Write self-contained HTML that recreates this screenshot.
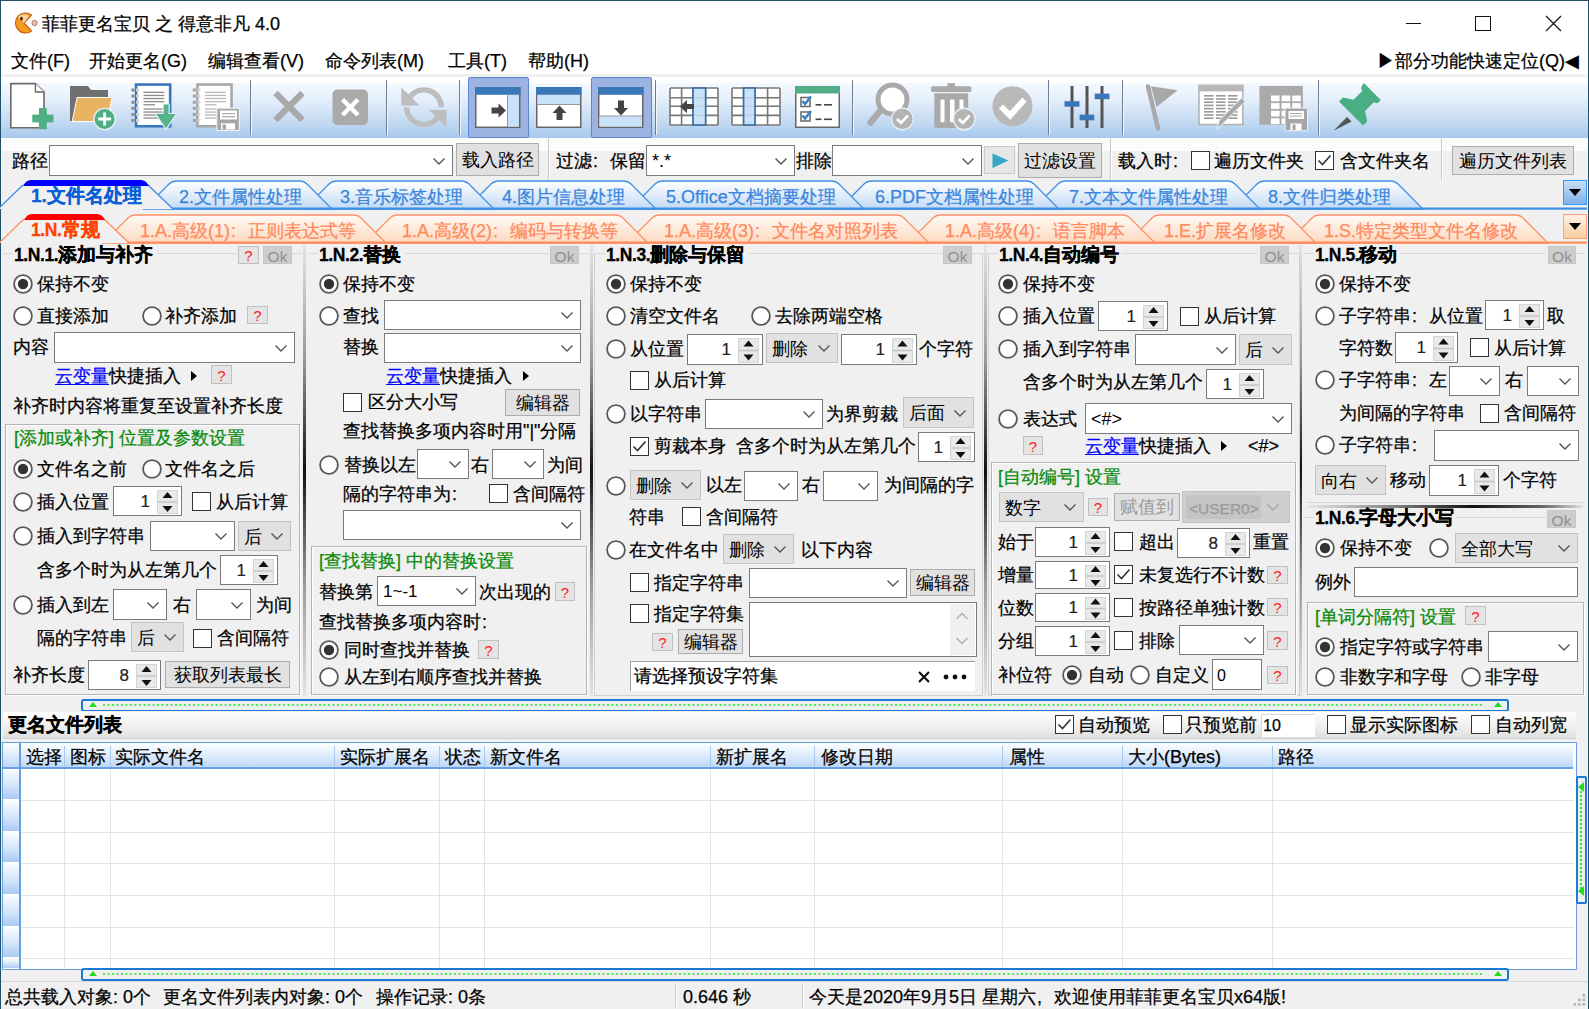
<!DOCTYPE html><html><head><meta charset="utf-8"><style>html,body{margin:0;padding:0;}
body{width:1589px;height:1009px;overflow:hidden;background:#f0f0f0;font-family:"Liberation Sans",sans-serif;}
#root{position:relative;width:1589px;height:1009px;overflow:hidden;background:#f0f0f0;}
.t{position:absolute;white-space:nowrap;line-height:26px;font-size:18px;-webkit-text-stroke:0.25px currentColor;}
.rd{position:absolute;}
.ck{position:absolute;width:19px;height:19px;box-sizing:border-box;border:1.5px solid #333;background:#fff;}
.ck svg{position:absolute;left:-1.5px;top:-1.5px;}
.cb{position:absolute;box-sizing:border-box;border:1px solid #7a7a7a;background:#fff;}
.cb.gray{background:#e1e1e1;border-color:#c4c4c4;}
.spn{position:absolute;box-sizing:border-box;border:1px solid #7a7a7a;background:#fff;}
.spn .num{position:absolute;line-height:26px;font-size:17px;color:#222;-webkit-text-stroke:0.2px #222;}
.sp{position:absolute;}
.sp svg{display:block}
.bt{position:absolute;box-sizing:border-box;border:1px solid #adadad;background:#e1e1e1;text-align:center;font-size:18px;white-space:nowrap;}
.q{position:absolute;box-sizing:border-box;border:1.5px solid #c0c0c0;background:#e4e4e4;text-align:center;font-size:15px;color:#ff2020;}
.ok{position:absolute;box-sizing:border-box;background:#cdcdcd;border:1px solid #c6c6c6;text-align:center;font-size:15.5px;color:#8f8f8f;}
.fc{display:inline-block;width:1em;text-align:left;padding-left:1px;box-sizing:border-box;}
.ed{position:absolute;box-sizing:border-box;border:1px solid #7a7a7a;background:#fff;font-size:18px;line-height:26px;}
</style></head><body><div id="root"><div style="position:absolute;left:0px;top:0px;width:1589px;height:40px;box-sizing:border-box;background:#fff;"></div>
<div style="position:absolute;left:0px;top:40px;width:1589px;height:35px;box-sizing:border-box;background:#fff;"></div>
<div style="position:absolute;left:0px;top:0px;width:1589px;height:1px;box-sizing:border-box;background:#1e4f6b;"></div>
<div style="position:absolute;left:0px;top:0px;width:1px;height:1009px;box-sizing:border-box;background:#1e4f6b;"></div>
<div style="position:absolute;left:1588px;top:0px;width:1px;height:1009px;box-sizing:border-box;background:#1e4f6b;"></div>
<svg style="position:absolute;left:12px;top:11px" width="26" height="24" viewBox="0 0 26 24"><path d="M19.5 4 A10 10 0 1 0 19.5 20 L12 12 Z" fill="#f59a23" stroke="#c8620a" stroke-width="1.2"/><path d="M6 6 A8 8 0 0 1 17 5 L12 12 Z" fill="#fbd29a"/><ellipse cx="9.5" cy="7.8" rx="1.3" ry="2" fill="#222"/><circle cx="22.5" cy="12" r="2.6" fill="#f3c0b0" stroke="#8a5a4a" stroke-width="0.8"/></svg>
<div class="t" style="left:42px;top:11px;font-size:18px;color:#000;">菲菲更名宝贝 之 得意非凡 4.0</div>
<div style="position:absolute;left:1406px;top:23px;width:15px;height:1px;box-sizing:border-box;background:#111;"></div>
<div style="position:absolute;left:1475px;top:16px;width:16px;height:15px;box-sizing:border-box;border:1.2px solid #111;"></div>
<svg style="position:absolute;left:1545px;top:15px" width="17" height="17" viewBox="0 0 17 17"><path d="M1 1 L16 16 M16 1 L1 16" stroke="#111" stroke-width="1.2"/></svg>
<div class="t" style="left:11px;top:48px;font-size:18px;color:#000;">文件(F)</div>
<div class="t" style="left:89px;top:48px;font-size:18px;color:#000;">开始更名(G)</div>
<div class="t" style="left:208px;top:48px;font-size:18px;color:#000;">编辑查看(V)</div>
<div class="t" style="left:325px;top:48px;font-size:18px;color:#000;">命令列表(M)</div>
<div class="t" style="left:448px;top:48px;font-size:18px;color:#000;">工具(T)</div>
<div class="t" style="left:528px;top:48px;font-size:18px;color:#000;">帮助(H)</div>
<div class="t" style="left:1377px;top:48px;font-size:18px;color:#000;">▶部分功能快速定位(Q)◀</div>
<div style="position:absolute;left:2px;top:74px;width:1585px;height:3px;box-sizing:border-box;background:#f0f0f0;"></div>
<div style="position:absolute;left:1px;top:77px;width:1587px;height:6px;box-sizing:border-box;background:#fff;"></div>
<div style="position:absolute;left:1px;top:83px;width:1587px;height:55px;box-sizing:border-box;background:linear-gradient(to bottom,#f4f9fe 0%,#e6f0fb 28%,#d8e7f9 45%,#c8ddf2 65%,#b3d0ef 88%,#a9c8ee 100%);"></div>
<div style="position:absolute;left:250px;top:80px;width:2px;height:55px;box-sizing:border-box;background:linear-gradient(to right,#6e7f95 0 1px,#f4f8fd 1px 2px);"></div>
<div style="position:absolute;left:386px;top:80px;width:2px;height:55px;box-sizing:border-box;background:linear-gradient(to right,#6e7f95 0 1px,#f4f8fd 1px 2px);"></div>
<div style="position:absolute;left:459px;top:80px;width:2px;height:55px;box-sizing:border-box;background:linear-gradient(to right,#6e7f95 0 1px,#f4f8fd 1px 2px);"></div>
<div style="position:absolute;left:655px;top:80px;width:2px;height:55px;box-sizing:border-box;background:linear-gradient(to right,#6e7f95 0 1px,#f4f8fd 1px 2px);"></div>
<div style="position:absolute;left:852px;top:80px;width:2px;height:55px;box-sizing:border-box;background:linear-gradient(to right,#6e7f95 0 1px,#f4f8fd 1px 2px);"></div>
<div style="position:absolute;left:1048px;top:80px;width:2px;height:55px;box-sizing:border-box;background:linear-gradient(to right,#6e7f95 0 1px,#f4f8fd 1px 2px);"></div>
<div style="position:absolute;left:1122px;top:80px;width:2px;height:55px;box-sizing:border-box;background:linear-gradient(to right,#6e7f95 0 1px,#f4f8fd 1px 2px);"></div>
<div style="position:absolute;left:1318px;top:80px;width:2px;height:55px;box-sizing:border-box;background:linear-gradient(to right,#6e7f95 0 1px,#f4f8fd 1px 2px);"></div>
<svg style="position:absolute;left:0px;top:75px;overflow:visible" width="60" height="60" viewBox="0 0 60 60"><path d="M10.8 8.6 H35.4 L44 17 V52.7 H10.8 Z" fill="#fff" stroke="#6a6a6a" stroke-width="1.6"/><path d="M35.4 8.6 V17 H44" fill="#fff" stroke="#6a6a6a" stroke-width="1.4"/><rect x="32.3" y="39.6" width="21.2" height="7.8" fill="#4fae84"/><rect x="39" y="33" width="7.8" height="21.2" fill="#4fae84"/></svg>
<svg style="position:absolute;left:60px;top:75px;overflow:visible" width="60" height="60" viewBox="0 0 60 60"><path d="M10 11 H28 L31 15 H48 V46 H10 Z" fill="#707070"/><path d="M17 22.5 H52 L47.5 46.5 H12.2 Z" fill="#e9b462" stroke="#fff" stroke-width="1"/><circle cx="44.6" cy="44" r="10.6" fill="#4fae84" stroke="#eaf2fa" stroke-width="1.2"/><path d="M44.6 37.5 V50.5 M38.1 44 H51.1" stroke="#fff" stroke-width="2.8"/></svg>
<svg style="position:absolute;left:125px;top:75px;overflow:visible" width="60" height="60" viewBox="0 0 60 60"><rect x="11.050000000000011" y="9.549999999999997" width="34.099999999999994" height="41.7" fill="#fff" stroke="#3a75c0" stroke-width="2.6"/><rect x="6.400000000000006" y="13.5" width="3" height="3" fill="#8a8a8a"/><rect x="11" y="13.5" width="3" height="3" fill="#cfcfcf"/><rect x="6.400000000000006" y="19.6" width="3" height="3" fill="#8a8a8a"/><rect x="11" y="19.6" width="3" height="3" fill="#cfcfcf"/><rect x="6.400000000000006" y="25.7" width="3" height="3" fill="#8a8a8a"/><rect x="11" y="25.7" width="3" height="3" fill="#cfcfcf"/><rect x="6.400000000000006" y="31.799999999999997" width="3" height="3" fill="#8a8a8a"/><rect x="11" y="31.799999999999997" width="3" height="3" fill="#cfcfcf"/><rect x="6.400000000000006" y="37.9" width="3" height="3" fill="#8a8a8a"/><rect x="11" y="37.9" width="3" height="3" fill="#cfcfcf"/><rect x="6.400000000000006" y="44.0" width="3" height="3" fill="#8a8a8a"/><rect x="11" y="44.0" width="3" height="3" fill="#cfcfcf"/><rect x="18.5" y="16.699999999999996" width="20.8" height="1.3" fill="#8c8c8c"/><rect x="18.5" y="19.800000000000004" width="20.8" height="1.3" fill="#8c8c8c"/><rect x="18.5" y="22.9" width="20.8" height="1.3" fill="#8c8c8c"/><rect x="18.5" y="25.999999999999993" width="20.8" height="1.3" fill="#8c8c8c"/><rect x="18.5" y="29.1" width="11.5" height="1.3" fill="#8c8c8c"/><rect x="18.5" y="33.4" width="20.8" height="1.3" fill="#8c8c8c"/><rect x="18.5" y="36.4" width="20.8" height="1.3" fill="#8c8c8c"/><rect x="18.5" y="39.4" width="20.8" height="1.3" fill="#8c8c8c"/><rect x="18.5" y="42.4" width="20.8" height="1.3" fill="#8c8c8c"/><path d="M38.1 29 H44.2 V38.5 H51.7 L41 54.4 L30.2 38.5 H38.1 Z" fill="#55b48a" stroke="#e6f0fb" stroke-width="1.2"/></svg>
<svg style="position:absolute;left:187px;top:75px;overflow:visible" width="60" height="60" viewBox="0 0 60 60"><rect x="10.450000000000017" y="9.549999999999997" width="34.099999999999994" height="41.7" fill="#fff" stroke="#a8a8a8" stroke-width="2.6"/><rect x="5.800000000000011" y="13.5" width="3" height="3" fill="#a0a0a0"/><rect x="10.400000000000006" y="13.5" width="3" height="3" fill="#d6d6d6"/><rect x="5.800000000000011" y="19.6" width="3" height="3" fill="#a0a0a0"/><rect x="10.400000000000006" y="19.6" width="3" height="3" fill="#d6d6d6"/><rect x="5.800000000000011" y="25.7" width="3" height="3" fill="#a0a0a0"/><rect x="10.400000000000006" y="25.7" width="3" height="3" fill="#d6d6d6"/><rect x="5.800000000000011" y="31.799999999999997" width="3" height="3" fill="#a0a0a0"/><rect x="10.400000000000006" y="31.799999999999997" width="3" height="3" fill="#d6d6d6"/><rect x="5.800000000000011" y="37.9" width="3" height="3" fill="#a0a0a0"/><rect x="10.400000000000006" y="37.9" width="3" height="3" fill="#d6d6d6"/><rect x="5.800000000000011" y="44.0" width="3" height="3" fill="#a0a0a0"/><rect x="10.400000000000006" y="44.0" width="3" height="3" fill="#d6d6d6"/><rect x="17.900000000000006" y="16.699999999999996" width="20.8" height="1.3" fill="#b8b8b8"/><rect x="17.900000000000006" y="19.800000000000004" width="20.8" height="1.3" fill="#b8b8b8"/><rect x="17.900000000000006" y="22.9" width="20.8" height="1.3" fill="#b8b8b8"/><rect x="17.900000000000006" y="25.999999999999993" width="20.8" height="1.3" fill="#b8b8b8"/><rect x="17.900000000000006" y="29.1" width="11.5" height="1.3" fill="#b8b8b8"/><rect x="17.900000000000006" y="33.4" width="20.8" height="1.3" fill="#b8b8b8"/><rect x="17.900000000000006" y="36.4" width="20.8" height="1.3" fill="#b8b8b8"/><rect x="17.900000000000006" y="39.4" width="20.8" height="1.3" fill="#b8b8b8"/><rect x="17.900000000000006" y="42.4" width="20.8" height="1.3" fill="#b8b8b8"/><rect x="29.8" y="33.2" width="22.6" height="22.3" rx="1.5" fill="#a6a6a6" stroke="#e9f1fa" stroke-width="1.2"/><rect x="33" y="35.5" width="17" height="9" fill="#fff"/><rect x="35" y="38" width="13" height="1.2" fill="#aaa"/><rect x="35" y="41" width="13" height="1.2" fill="#aaa"/><rect x="34" y="48.3" width="14" height="6.2" fill="#fff"/><rect x="35.5" y="49.5" width="3.5" height="5" fill="#a6a6a6"/></svg>
<svg style="position:absolute;left:265px;top:75px;overflow:visible" width="50" height="60" viewBox="0 0 50 60"><path d="M10.5 18 L37.5 45 M37.5 18 L10.5 45" stroke="#a9a9a9" stroke-width="6.2"/></svg>
<svg style="position:absolute;left:325px;top:75px;overflow:visible" width="50" height="60" viewBox="0 0 50 60"><rect x="7.5" y="14.5" width="35.5" height="35.5" rx="5" fill="#aaaaaa"/><path d="M17.5 24.5 L33 40 M33 24.5 L17.5 40" stroke="#fff" stroke-width="4.4"/></svg>
<svg style="position:absolute;left:395px;top:75px;overflow:visible" width="60" height="60" viewBox="0 0 60 60"><path d="M14.7 22.2 A17.35 17.35 0 0 1 46.25 32.2" fill="none" stroke="#bdbdbd" stroke-width="5.3"/><path d="M43.1 42.15 A17.35 17.35 0 0 1 11.55 32.2" fill="none" stroke="#bdbdbd" stroke-width="5.3"/><path d="M6.3 12.5 L6.3 30.5 L24.5 30.5 Z" fill="#bdbdbd"/><path d="M51.5 52 L51.5 35 L34 35 Z" fill="#bdbdbd"/></svg>
<div style="position:absolute;left:468px;top:77px;width:61px;height:61px;box-sizing:border-box;background:#9db4e3;border:1px solid #5b86d0;border-radius:2px;"></div>
<div style="position:absolute;left:591px;top:77px;width:61px;height:61px;box-sizing:border-box;background:#9db4e3;border:1px solid #5b86d0;border-radius:2px;"></div>
<svg style="position:absolute;left:475px;top:87px;overflow:visible" width="46" height="41" viewBox="0 0 46 41"><rect x="0.75" y="0.75" width="44" height="39.5" fill="#fff" stroke="#666" stroke-width="1.5"/><rect x="32.5" y="8" width="11.5" height="31.5" fill="#c8e2fa"/><line x1="32.5" y1="8" x2="32.5" y2="40" stroke="#999" stroke-width="1"/><path d="M16.5 20.5 H23.5 V16.5 L31 23.5 L23.5 30.5 V26.5 H16.5 Z" fill="#444"/><rect x="0" y="0" width="45.5" height="7.8" fill="#3a78b8"/></svg>
<svg style="position:absolute;left:536px;top:87px;overflow:visible" width="46" height="41" viewBox="0 0 46 41"><rect x="0.75" y="0.75" width="44" height="39.5" fill="#fff" stroke="#666" stroke-width="1.5"/><rect x="1.5" y="8" width="42.5" height="9.5" fill="#c8e2fa"/><line x1="1" y1="17.5" x2="44" y2="17.5" stroke="#999" stroke-width="1"/><path d="M23.5 18.5 L30.5 26 H26.5 V33 H20.5 V26 H16.5 Z" fill="#444"/><rect x="0" y="0" width="45.5" height="7.8" fill="#3a78b8"/></svg>
<svg style="position:absolute;left:598px;top:87px;overflow:visible" width="46" height="41" viewBox="0 0 46 41"><rect x="0.75" y="0.75" width="44" height="39.5" fill="#fff" stroke="#666" stroke-width="1.5"/><rect x="1.5" y="29" width="42.5" height="10.5" fill="#c8e2fa"/><line x1="1" y1="29" x2="44" y2="29" stroke="#999" stroke-width="1"/><path d="M20 13.5 H26 V21 H30 L23 28.5 L16 21 H20 Z" fill="#444"/><rect x="0" y="0" width="45.5" height="7.8" fill="#3a78b8"/></svg>
<svg style="position:absolute;left:670px;top:87.6px;overflow:visible" width="48" height="37" viewBox="0 0 48 37"><rect x="0" y="0" width="48" height="37" fill="#fff"/><rect x="23" y="0" width="12.600000000000001" height="37" fill="#c8e2fa"/><line x1="0" y1="0" x2="0" y2="37" stroke="#777" stroke-width="1.6"/><line x1="11.6" y1="0" x2="11.6" y2="37" stroke="#777" stroke-width="1.6"/><line x1="23" y1="0" x2="23" y2="37" stroke="#777" stroke-width="1.6"/><line x1="35.6" y1="0" x2="35.6" y2="37" stroke="#777" stroke-width="1.6"/><line x1="48" y1="0" x2="48" y2="37" stroke="#777" stroke-width="1.6"/><line x1="0" y1="0" x2="48" y2="0" stroke="#777" stroke-width="1.6"/><line x1="0" y1="9.8" x2="48" y2="9.8" stroke="#777" stroke-width="1.6"/><line x1="0" y1="18.2" x2="48" y2="18.2" stroke="#777" stroke-width="1.6"/><line x1="0" y1="27.4" x2="48" y2="27.4" stroke="#777" stroke-width="1.6"/><line x1="0" y1="37" x2="48" y2="37" stroke="#777" stroke-width="1.6"/><rect x="23" y="0" width="12.600000000000001" height="37" fill="#c8e2fa" fill-opacity="0.85" stroke="#3a6ea8" stroke-width="1.6"/><path d="M10 18.5 L17 11.9 V16 H24 V21 H17 V25.2 Z" fill="#444"/></svg>
<svg style="position:absolute;left:731.7px;top:87.6px;overflow:visible" width="48" height="37" viewBox="0 0 48 37"><rect x="0" y="0" width="48" height="37" fill="#fff"/><rect x="11.6" y="0" width="11.4" height="37" fill="#c8e2fa"/><line x1="0" y1="0" x2="0" y2="37" stroke="#777" stroke-width="1.6"/><line x1="11.6" y1="0" x2="11.6" y2="37" stroke="#777" stroke-width="1.6"/><line x1="23" y1="0" x2="23" y2="37" stroke="#777" stroke-width="1.6"/><line x1="35.6" y1="0" x2="35.6" y2="37" stroke="#777" stroke-width="1.6"/><line x1="48" y1="0" x2="48" y2="37" stroke="#777" stroke-width="1.6"/><line x1="0" y1="0" x2="48" y2="0" stroke="#777" stroke-width="1.6"/><line x1="0" y1="9.8" x2="48" y2="9.8" stroke="#777" stroke-width="1.6"/><line x1="0" y1="18.2" x2="48" y2="18.2" stroke="#777" stroke-width="1.6"/><line x1="0" y1="27.4" x2="48" y2="27.4" stroke="#777" stroke-width="1.6"/><line x1="0" y1="37" x2="48" y2="37" stroke="#777" stroke-width="1.6"/><rect x="11.6" y="0" width="11.4" height="37" fill="#c8e2fa" fill-opacity="0.85" stroke="#3a6ea8" stroke-width="1.6"/></svg>
<svg style="position:absolute;left:795px;top:86px;overflow:visible" width="45" height="42" viewBox="0 0 45 42"><rect x="0.75" y="0.75" width="43.5" height="40.5" fill="#fff" stroke="#666" stroke-width="1.5"/><rect x="0" y="0" width="45" height="7.5" fill="#52ad86"/><rect x="6" y="11.5" width="9" height="9" fill="none" stroke="#666" stroke-width="1.5"/><path d="M7.5 15 L10 18 L16 10.5" stroke="#3d7ec8" stroke-width="2.6" fill="none"/><rect x="6" y="26" width="9" height="9" fill="none" stroke="#666" stroke-width="1.5"/><path d="M7.5 29.5 L10 32.5 L16 25" stroke="#3d7ec8" stroke-width="2.6" fill="none"/><rect x="20.5" y="18" width="6" height="1.6" fill="#444"/><rect x="29" y="18" width="8" height="1.6" fill="#444"/><rect x="20.5" y="32.5" width="6" height="1.6" fill="#444"/><rect x="29" y="32.5" width="8" height="1.6" fill="#444"/></svg>
<svg style="position:absolute;left:860px;top:75px;overflow:visible" width="60" height="60" viewBox="0 0 60 60"><circle cx="32.5" cy="24.5" r="14.5" fill="#fff" stroke="#aaaaaa" stroke-width="5"/><path d="M20 36 L10.5 47.5" stroke="#aaaaaa" stroke-width="6.5" stroke-linecap="round"/><circle cx="42.5" cy="44" r="10.8" fill="#b4b4b4" stroke="#e9f1fa" stroke-width="1.2"/><path d="M37 44 L41 48 L48 40.5" stroke="#fff" stroke-width="2.6" fill="none"/></svg>
<svg style="position:absolute;left:925px;top:75px;overflow:visible" width="60" height="60" viewBox="0 0 60 60"><rect x="6" y="11.3" width="40.4" height="5.7" rx="1.5" fill="#aaaaaa"/><rect x="22.5" y="8.2" width="7.5" height="4" fill="#aaaaaa"/><path d="M9.3 18.3 H43.2 V51 Q43.2 52.9 41.3 52.9 H11.2 Q9.3 52.9 9.3 51 Z" fill="#aaaaaa"/><rect x="15.5" y="24.5" width="4" height="22.7" rx="1" fill="#fff"/><rect x="25" y="24.5" width="4.5" height="22.7" rx="1" fill="#fff"/><rect x="34.5" y="24.5" width="4" height="22.7" rx="1" fill="#fff"/><circle cx="39.2" cy="44" r="10.8" fill="#b4b4b4" stroke="#e9f1fa" stroke-width="1.4"/><path d="M33.7 44 L37.7 48 L44.7 40.5" stroke="#fff" stroke-width="2.6" fill="none"/></svg>
<svg style="position:absolute;left:985px;top:75px;overflow:visible" width="60" height="60" viewBox="0 0 60 60"><circle cx="27.5" cy="31.2" r="20" fill="#b9b9b9"/><path d="M16 31.5 L25 40.5 L39.5 24.5" stroke="#fff" stroke-width="6" fill="none"/></svg>
<svg style="position:absolute;left:1060px;top:75px;overflow:visible" width="60" height="60" viewBox="0 0 60 60"><rect x="10.5" y="11" width="3" height="42" fill="#555"/><rect x="25.5" y="11" width="3" height="42" fill="#555"/><rect x="40.5" y="11" width="3" height="42" fill="#555"/><rect x="4.5" y="26.2" width="15" height="5.5" fill="#3a76b8"/><rect x="19.6" y="39.6" width="14.7" height="5.7" fill="#3a76b8"/><rect x="34.7" y="18.6" width="14.8" height="5.6" fill="#3a76b8"/></svg>
<svg style="position:absolute;left:1135px;top:75px;overflow:visible" width="60" height="60" viewBox="0 0 60 60"><path d="M13 11.5 L23 53.5" stroke="#a9a9a9" stroke-width="4.5" stroke-linecap="round"/><path d="M16 11.3 L42.8 15.2 L21.5 32 Z" fill="#a9a9a9"/></svg>
<svg style="position:absolute;left:1195px;top:75px;overflow:visible" width="60" height="60" viewBox="0 0 60 60"><rect x="4" y="10.5" width="43.8" height="39" fill="#fff" stroke="#b0b0b0" stroke-width="1.5"/><rect x="3.3" y="9.8" width="45.2" height="6.6" fill="#b8b8b8"/><rect x="9" y="20.0" width="9.5" height="1.6" fill="#999"/><rect x="9" y="23.2" width="9.5" height="1.6" fill="#999"/><rect x="9" y="26.4" width="9.5" height="1.6" fill="#999"/><rect x="9" y="29.6" width="9.5" height="1.6" fill="#999"/><rect x="9" y="32.8" width="9.5" height="1.6" fill="#999"/><rect x="9" y="36.0" width="9.5" height="1.6" fill="#999"/><rect x="9" y="39.2" width="9.5" height="1.6" fill="#999"/><rect x="9" y="42.400000000000006" width="9.5" height="1.6" fill="#999"/><rect x="21" y="20.0" width="9.5" height="1.6" fill="#999"/><rect x="21" y="23.2" width="9.5" height="1.6" fill="#999"/><rect x="21" y="26.4" width="9.5" height="1.6" fill="#999"/><rect x="21" y="29.6" width="9.5" height="1.6" fill="#999"/><rect x="21" y="32.8" width="9.5" height="1.6" fill="#999"/><rect x="21" y="36.0" width="9.5" height="1.6" fill="#999"/><rect x="21" y="39.2" width="9.5" height="1.6" fill="#999"/><rect x="21" y="42.400000000000006" width="9.5" height="1.6" fill="#999"/><rect x="33" y="20.0" width="9.5" height="1.6" fill="#999"/><rect x="33" y="23.2" width="9.5" height="1.6" fill="#999"/><rect x="33" y="26.4" width="9.5" height="1.6" fill="#999"/><rect x="33" y="29.6" width="9.5" height="1.6" fill="#999"/><rect x="33" y="32.8" width="9.5" height="1.6" fill="#999"/><rect x="33" y="36.0" width="9.5" height="1.6" fill="#999"/><rect x="33" y="39.2" width="9.5" height="1.6" fill="#999"/><rect x="33" y="42.400000000000006" width="9.5" height="1.6" fill="#999"/><path d="M21.8 54 L24.5 45 L46.5 23 L50 26.5 L28 48.5 Z" fill="#a8a8a8" stroke="#e9f1fa" stroke-width="1"/></svg>
<svg style="position:absolute;left:1255px;top:75px;overflow:visible" width="60" height="60" viewBox="0 0 60 60"><rect x="4.4" y="10.9" width="43.5" height="38.7" fill="#aaaaaa"/><rect x="16.0" y="20.5" width="8.6" height="5.8" fill="#fff"/><rect x="16.0" y="28.1" width="8.6" height="5.8" fill="#fff"/><rect x="16.0" y="35.7" width="8.6" height="5.8" fill="#fff"/><rect x="16.0" y="43.3" width="8.6" height="5.8" fill="#fff"/><rect x="26.6" y="20.5" width="8.6" height="5.8" fill="#fff"/><rect x="26.6" y="28.1" width="8.6" height="5.8" fill="#fff"/><rect x="26.6" y="35.7" width="8.6" height="5.8" fill="#fff"/><rect x="26.6" y="43.3" width="8.6" height="5.8" fill="#fff"/><rect x="37.2" y="20.5" width="8.6" height="5.8" fill="#fff"/><rect x="37.2" y="28.1" width="8.6" height="5.8" fill="#fff"/><rect x="37.2" y="35.7" width="8.6" height="5.8" fill="#fff"/><rect x="37.2" y="43.3" width="8.6" height="5.8" fill="#fff"/><rect x="30" y="33" width="22.6" height="22.7" rx="1.5" fill="#a6a6a6" stroke="#eef4fb" stroke-width="1"/><rect x="33.5" y="36" width="15.5" height="8" fill="#fff"/><rect x="35" y="38" width="12" height="1" fill="#aaa"/><rect x="35" y="40.6" width="12" height="1" fill="#aaa"/><rect x="35.5" y="48.5" width="11" height="6.5" fill="#fff"/><rect x="37.5" y="49.5" width="3" height="5.5" fill="#a6a6a6"/></svg>
<svg style="position:absolute;left:1325px;top:75px;overflow:visible" width="60" height="60" viewBox="0 0 60 60"><path d="M8.6 55.7 L22 42 L26.5 46.5 Z" fill="#555"/><path d="M38.8 8 L55.8 25 L52.5 28.2 L48.5 27.5 L40 36 L42.2 46.5 L38 50.5 L14 26.5 L18 22.5 L28.5 24.7 L37 16.2 L36.2 12.2 Z" fill="#4aae84"/></svg>
<div style="position:absolute;left:1px;top:138px;width:1587px;height:13px;box-sizing:border-box;background:#fcfcfc;"></div>
<div class="t" style="left:12px;top:148px;font-size:18px;color:#000;">路径</div>
<div class="cb" style="left:49px;top:145px;width:404px;height:31px"><span style="position:absolute;right:6px;top:11px;line-height:0"><svg class="chev" width="14" height="9" viewBox="0 0 14 9"><path d="M1.5 1.5 L7 7 L12.5 1.5" stroke="#555" stroke-width="1.4" fill="none"/></svg></span></div>
<div class="bt" style="left:456px;top:143px;width:83px;height:33px;line-height:30px;padding-top:1px;color:#000">载入路径</div>
<div style="position:absolute;left:548px;top:138px;width:2px;height:42px;box-sizing:border-box;background:linear-gradient(to right,#c8c8c8 0 1px,#fff 1px 2px);"></div>
<div class="t" style="left:556px;top:148px;font-size:18px;color:#000;">过滤<span class="fc">:</span>保留</div>
<div class="cb" style="left:646px;top:145px;width:149px;height:31px"><span style="position:absolute;left:5px;top:2px;font-size:18px;line-height:26px;color:#000">*.*</span><span style="position:absolute;right:6px;top:11px;line-height:0"><svg class="chev" width="14" height="9" viewBox="0 0 14 9"><path d="M1.5 1.5 L7 7 L12.5 1.5" stroke="#555" stroke-width="1.4" fill="none"/></svg></span></div>
<div class="t" style="left:796px;top:148px;font-size:18px;color:#000;">排除</div>
<div class="cb" style="left:832px;top:145px;width:150px;height:31px"><span style="position:absolute;right:6px;top:11px;line-height:0"><svg class="chev" width="14" height="9" viewBox="0 0 14 9"><path d="M1.5 1.5 L7 7 L12.5 1.5" stroke="#555" stroke-width="1.4" fill="none"/></svg></span></div>
<div style="position:absolute;left:984px;top:146px;width:31px;height:28px;box-sizing:border-box;background:#e6e6e6;border:1px solid #c9c9c9;"></div>
<svg style="position:absolute;left:992px;top:153px;overflow:visible" width="18" height="16" viewBox="0 0 18 16"><path d="M0.5 0.5 L16.5 7.5 L0.5 15 Z" fill="#35a7c4"/></svg>
<div class="bt" style="left:1018px;top:143px;width:84px;height:35px;line-height:32px;padding-top:1px;color:#000">过滤设置</div>
<div style="position:absolute;left:1110px;top:138px;width:2px;height:42px;box-sizing:border-box;background:linear-gradient(to right,#c8c8c8 0 1px,#fff 1px 2px);"></div>
<div class="t" style="left:1118px;top:148px;font-size:18px;color:#000;">载入时<span class="fc">:</span></div>
<div class="ck" style="left:1191px;top:151px"></div>
<div class="t" style="left:1214px;top:148px;font-size:18px;color:#000;">遍历文件夹</div>
<div class="ck" style="left:1315px;top:151px"><svg width="19" height="19" viewBox="0 0 19 19"><path d="M3.5 9.5 L7.5 13.5 L15.5 4.5" stroke="#333" stroke-width="1.6" fill="none"/></svg></div>
<div class="t" style="left:1340px;top:148px;font-size:18px;color:#000;">含文件夹名</div>
<div style="position:absolute;left:1441px;top:138px;width:2px;height:42px;box-sizing:border-box;background:linear-gradient(to right,#c8c8c8 0 1px,#fff 1px 2px);"></div>
<div class="bt" style="left:1452px;top:146px;width:122px;height:29px;line-height:26px;padding-top:1px;color:#000">遍历文件列表</div>
<svg style="position:absolute;left:0px;top:180px;overflow:visible" width="1589" height="31" viewBox="0 0 1589 31"><defs><linearGradient id="g180" x1="0" y1="0" x2="0" y2="1"><stop offset="0" stop-color="#ffffff"/><stop offset="1" stop-color="#c3daf5"/></linearGradient></defs><path d="M1232 29 L1257 4 Q1260 1 1264 1 L1391 1 Q1395 1 1398 4 L1423 29 Z" fill="url(#g180)" stroke="#3d8fe6" stroke-width="1.3"/><path d="M1033 29 L1058 4 Q1061 1 1065 1 L1228 1 Q1232 1 1235 4 L1260 29 Z" fill="url(#g180)" stroke="#3d8fe6" stroke-width="1.3"/><path d="M839 29 L864 4 Q867 1 871 1 L1027 1 Q1031 1 1034 4 L1059 29 Z" fill="url(#g180)" stroke="#3d8fe6" stroke-width="1.3"/><path d="M630 29 L655 4 Q658 1 662 1 L832 1 Q836 1 839 4 L864 29 Z" fill="url(#g180)" stroke="#3d8fe6" stroke-width="1.3"/><path d="M466 29 L491 4 Q494 1 498 1 L624 1 Q628 1 631 4 L656 29 Z" fill="url(#g180)" stroke="#3d8fe6" stroke-width="1.3"/><path d="M304 29 L329 4 Q332 1 336 1 L462 1 Q466 1 469 4 L494 29 Z" fill="url(#g180)" stroke="#3d8fe6" stroke-width="1.3"/><path d="M144 29 L169 4 Q172 1 176 1 L300 1 Q304 1 307 4 L332 29 Z" fill="url(#g180)" stroke="#3d8fe6" stroke-width="1.3"/><rect x="171" y="27.5" width="1416" height="2.2" fill="#3d8fe6"/><path d="M-2 29 L23 5 L148 5 L173 29 L-2 29" fill="#f0f0f0" stroke="none"/><path d="M-2 29 L23 5 M148 5 L173 29" fill="none" stroke="#3d8fe6" stroke-width="1.3"/><path d="M23 6 Q26 0 31 0 L141 0 Q146 0 149 6 Z" fill="#0000ff"/></svg>
<div class="t" style="left:31px;top:183px;font-size:19px;color:#0b5fd6;font-weight:bold;-webkit-text-stroke:0.3px currentColor;">1.文件名处理</div>
<div class="t" style="left:179px;top:184px;font-size:18px;color:#3a86dc;">2.文件属性处理</div>
<div class="t" style="left:340px;top:184px;font-size:18px;color:#3a86dc;">3.音乐标签处理</div>
<div class="t" style="left:502px;top:184px;font-size:18px;color:#3a86dc;">4.图片信息处理</div>
<div class="t" style="left:666px;top:184px;font-size:18px;color:#3a86dc;">5.Office文档摘要处理</div>
<div class="t" style="left:875px;top:184px;font-size:18px;color:#3a86dc;">6.PDF文档属性处理</div>
<div class="t" style="left:1069px;top:184px;font-size:18px;color:#3a86dc;">7.文本文件属性处理</div>
<div class="t" style="left:1268px;top:184px;font-size:18px;color:#3a86dc;">8.文件归类处理</div>
<div style="position:absolute;left:1563px;top:180px;width:24px;height:25px;box-sizing:border-box;border:1px solid #3399ff;background:linear-gradient(#c9def6,#7fb2ea);"></div>
<svg style="position:absolute;left:1569px;top:189px;overflow:visible" width="12" height="7" viewBox="0 0 12 7"><path d="M0 0 H12 L6 7 Z" fill="#000"/></svg>
<svg style="position:absolute;left:0px;top:214px;overflow:visible" width="1589" height="31" viewBox="0 0 1589 31"><defs><linearGradient id="g214" x1="0" y1="0" x2="0" y2="1"><stop offset="0" stop-color="#fffaf5"/><stop offset="1" stop-color="#fcd9c0"/></linearGradient></defs><path d="M1287 29 L1312 4 Q1315 1 1319 1 L1516 1 Q1520 1 1523 4 L1548 29 Z" fill="url(#g214)" stroke="#ff8f66" stroke-width="1.3"/><path d="M1127 29 L1152 4 Q1155 1 1159 1 L1284 1 Q1288 1 1291 4 L1316 29 Z" fill="url(#g214)" stroke="#ff8f66" stroke-width="1.3"/><path d="M908 29 L933 4 Q936 1 940 1 L1123 1 Q1127 1 1130 4 L1155 29 Z" fill="url(#g214)" stroke="#ff8f66" stroke-width="1.3"/><path d="M627 29 L652 4 Q655 1 659 1 L897 1 Q901 1 904 4 L929 29 Z" fill="url(#g214)" stroke="#ff8f66" stroke-width="1.3"/><path d="M365 29 L390 4 Q393 1 397 1 L616 1 Q620 1 623 4 L648 29 Z" fill="url(#g214)" stroke="#ff8f66" stroke-width="1.3"/><path d="M103 29 L128 4 Q131 1 135 1 L354 1 Q358 1 361 4 L386 29 Z" fill="url(#g214)" stroke="#ff8f66" stroke-width="1.3"/><rect x="127" y="27.5" width="1460" height="2.2" fill="#ff8c5a"/><path d="M-1 29 L24 5 L104 5 L129 29 L-1 29" fill="#f0f0f0" stroke="none"/><path d="M-1 29 L24 5 M104 5 L129 29" fill="none" stroke="#ff8f66" stroke-width="1.3"/><path d="M24 6 Q27 0 32 0 L97 0 Q102 0 105 6 Z" fill="#ff0000"/></svg>
<div class="t" style="left:31px;top:217px;font-size:19px;color:#ff4400;font-weight:bold;-webkit-text-stroke:0.3px currentColor;"><span style="font-size:17.5px;letter-spacing:-0.4px">1.N.</span>常规</div>
<div class="t" style="left:140px;top:218px;font-size:18px;color:#ff8a5c;">1.A.高级(1)<span class="fc">:</span>正则表达式等</div>
<div class="t" style="left:402px;top:218px;font-size:18px;color:#ff8a5c;">1.A.高级(2)<span class="fc">:</span>编码与转换等</div>
<div class="t" style="left:664px;top:218px;font-size:18px;color:#ff8a5c;">1.A.高级(3)<span class="fc">:</span>文件名对照列表</div>
<div class="t" style="left:945px;top:218px;font-size:18px;color:#ff8a5c;">1.A.高级(4)<span class="fc">:</span>语言脚本</div>
<div class="t" style="left:1164px;top:218px;font-size:18px;color:#ff8a5c;">1.E.扩展名修改</div>
<div class="t" style="left:1324px;top:218px;font-size:18px;color:#ff8a5c;">1.S.特定类型文件名修改</div>
<div style="position:absolute;left:1563px;top:214px;width:24px;height:25px;box-sizing:border-box;border:1px solid #ffa07a;background:linear-gradient(#fff1e6,#f6cf9c);"></div>
<svg style="position:absolute;left:1569px;top:223px;overflow:visible" width="12" height="7" viewBox="0 0 12 7"><path d="M0 0 H12 L6 7 Z" fill="#000"/></svg>
<div style="position:absolute;left:303px;top:245px;width:3px;height:451px;box-sizing:border-box;background:linear-gradient(to bottom,#e4e4e4 0%,#9a9a9a 25%,#111 50%,#9a9a9a 75%,#e4e4e4 100%);"></div>
<div style="position:absolute;left:590px;top:245px;width:3px;height:451px;box-sizing:border-box;background:linear-gradient(to bottom,#e4e4e4 0%,#9a9a9a 25%,#111 50%,#9a9a9a 75%,#e4e4e4 100%);"></div>
<div style="position:absolute;left:984px;top:245px;width:3px;height:451px;box-sizing:border-box;background:linear-gradient(to bottom,#e4e4e4 0%,#9a9a9a 25%,#111 50%,#9a9a9a 75%,#e4e4e4 100%);"></div>
<div style="position:absolute;left:1299px;top:245px;width:3px;height:451px;box-sizing:border-box;background:linear-gradient(to bottom,#e4e4e4 0%,#9a9a9a 25%,#111 50%,#9a9a9a 75%,#e4e4e4 100%);"></div>
<div style="position:absolute;left:3px;top:253px;width:9px;height:1px;box-sizing:border-box;background:#d9d9d9;"></div>
<div style="position:absolute;left:157px;top:253px;width:79px;height:1px;box-sizing:border-box;background:#d9d9d9;"></div>
<div style="position:absolute;left:292px;top:253px;width:10px;height:1px;box-sizing:border-box;background:#d9d9d9;"></div>
<div style="position:absolute;left:309px;top:253px;width:9px;height:1px;box-sizing:border-box;background:#d9d9d9;"></div>
<div style="position:absolute;left:405px;top:253px;width:144px;height:1px;box-sizing:border-box;background:#d9d9d9;"></div>
<div style="position:absolute;left:579px;top:253px;width:10px;height:1px;box-sizing:border-box;background:#d9d9d9;"></div>
<div style="position:absolute;left:595px;top:253px;width:10px;height:1px;box-sizing:border-box;background:#d9d9d9;"></div>
<div style="position:absolute;left:749px;top:253px;width:193px;height:1px;box-sizing:border-box;background:#d9d9d9;"></div>
<div style="position:absolute;left:972px;top:253px;width:11px;height:1px;box-sizing:border-box;background:#d9d9d9;"></div>
<div style="position:absolute;left:988px;top:253px;width:10px;height:1px;box-sizing:border-box;background:#d9d9d9;"></div>
<div style="position:absolute;left:1122px;top:253px;width:136px;height:1px;box-sizing:border-box;background:#d9d9d9;"></div>
<div style="position:absolute;left:1289px;top:253px;width:9px;height:1px;box-sizing:border-box;background:#d9d9d9;"></div>
<div style="position:absolute;left:1304px;top:253px;width:10px;height:1px;box-sizing:border-box;background:#d9d9d9;"></div>
<div style="position:absolute;left:1400px;top:253px;width:146px;height:1px;box-sizing:border-box;background:#d9d9d9;"></div>
<div style="position:absolute;left:1576px;top:253px;width:9px;height:1px;box-sizing:border-box;background:#d9d9d9;"></div>
<div class="t" style="left:14px;top:242px;font-size:19px;color:#000;font-weight:bold;-webkit-text-stroke:0.3px currentColor;"><span style="font-size:17.5px;letter-spacing:-0.4px">1.N.1.</span>添加与补齐</div>
<div class="q" style="left:238px;top:246px;width:21px;height:18px;line-height:18px">?</div>
<div class="ok" style="left:263px;top:246px;width:29px;height:18px;line-height:19px">Ok</div>
<svg class="rd" style="left:12.5px;top:273.5px" width="20" height="20" viewBox="0 0 20 20"><circle cx="10" cy="10" r="8.9" fill="#fff" stroke="#585858" stroke-width="1.8"/><circle cx="10" cy="10" r="5.2" fill="#333"/></svg>
<div class="t" style="left:37px;top:271px;font-size:18px;color:#000;">保持不变</div>
<svg class="rd" style="left:12.5px;top:305.5px" width="20" height="20" viewBox="0 0 20 20"><circle cx="10" cy="10" r="8.9" fill="#fff" stroke="#585858" stroke-width="1.8"/></svg>
<div class="t" style="left:37px;top:303px;font-size:18px;color:#000;">直接添加</div>
<svg class="rd" style="left:141.5px;top:305.5px" width="20" height="20" viewBox="0 0 20 20"><circle cx="10" cy="10" r="8.9" fill="#fff" stroke="#585858" stroke-width="1.8"/></svg>
<div class="t" style="left:165px;top:303px;font-size:18px;color:#000;">补齐添加</div>
<div class="q" style="left:247px;top:306px;width:21px;height:18px;line-height:18px">?</div>
<div class="t" style="left:13px;top:334px;font-size:18px;color:#000;">内容</div>
<div class="cb" style="left:54px;top:332px;width:241px;height:31px"><span style="position:absolute;right:6px;top:11px;line-height:0"><svg class="chev" width="14" height="9" viewBox="0 0 14 9"><path d="M1.5 1.5 L7 7 L12.5 1.5" stroke="#555" stroke-width="1.4" fill="none"/></svg></span></div>
<div class="t" style="left:55px;top:363px"><span style="color:#0000ff;text-decoration:underline;text-underline-offset:2px">云变量</span>快捷插入</div>
<svg style="position:absolute;left:190px;top:370px" width="8" height="12" viewBox="0 0 8 12"><path d="M1 1 L7 6 L1 11 Z" fill="#000"/></svg>
<div class="q" style="left:211px;top:365px;width:21px;height:19px;line-height:19px">?</div>
<div class="t" style="left:13px;top:393px;font-size:18px;color:#000;">补齐时内容将重复至设置补齐长度</div>
<div style="position:absolute;left:5px;top:424px;width:295px;height:271px;box-sizing:border-box;border:1px solid #b4b4b4;box-shadow:inset 1px 1px 0 #fff, 1px 1px 0 #fff;"></div>
<div class="t" style="left:14px;top:425px;font-size:18px;color:#0a8a0a;">[添加或补齐] 位置及参数设置</div>
<svg class="rd" style="left:12.5px;top:458.5px" width="20" height="20" viewBox="0 0 20 20"><circle cx="10" cy="10" r="8.9" fill="#fff" stroke="#585858" stroke-width="1.8"/><circle cx="10" cy="10" r="5.2" fill="#333"/></svg>
<div class="t" style="left:37px;top:456px;font-size:18px;color:#000;">文件名之前</div>
<svg class="rd" style="left:141.5px;top:458.5px" width="20" height="20" viewBox="0 0 20 20"><circle cx="10" cy="10" r="8.9" fill="#fff" stroke="#585858" stroke-width="1.8"/></svg>
<div class="t" style="left:165px;top:456px;font-size:18px;color:#000;">文件名之后</div>
<svg class="rd" style="left:12.5px;top:491.5px" width="20" height="20" viewBox="0 0 20 20"><circle cx="10" cy="10" r="8.9" fill="#fff" stroke="#585858" stroke-width="1.8"/></svg>
<div class="t" style="left:37px;top:489px;font-size:18px;color:#000;">插入位置</div>
<div class="spn" style="left:113px;top:486px;width:69px;height:30px"><span class="num" style="right:31px;top:2px">1</span><div class="sp" style="right:3px;top:3px;width:21px;height:24px"><svg width="21" height="24" viewBox="0 0 21 24"><rect x="0.5" y="0.5" width="20" height="23" fill="#e9e9e9" stroke="#d4d4d4"/><line x1="1" y1="12.0" x2="20" y2="12.0" stroke="#c4c4c4" stroke-width="1.5"/><path d="M5.5 8.0 L10.5 2.0 L15.5 8.0 Z" fill="#111"/><path d="M5.5 16.0 L10.5 22.0 L15.5 16.0 Z" fill="#111"/></svg></div></div>
<div class="ck" style="left:192px;top:492px"></div>
<div class="t" style="left:216px;top:489px;font-size:18px;color:#000;">从后计算</div>
<svg class="rd" style="left:12.5px;top:525.5px" width="20" height="20" viewBox="0 0 20 20"><circle cx="10" cy="10" r="8.9" fill="#fff" stroke="#585858" stroke-width="1.8"/></svg>
<div class="t" style="left:37px;top:523px;font-size:18px;color:#000;">插入到字符串</div>
<div class="cb" style="left:150px;top:521px;width:85px;height:30px"><span style="position:absolute;right:6px;top:10px;line-height:0"><svg class="chev" width="14" height="9" viewBox="0 0 14 9"><path d="M1.5 1.5 L7 7 L12.5 1.5" stroke="#555" stroke-width="1.4" fill="none"/></svg></span></div>
<div class="cb gray" style="left:238px;top:521px;width:53px;height:30px"><span style="position:absolute;left:5px;top:2px;font-size:18px;line-height:26px;color:#000">后</span><span style="position:absolute;right:6px;top:10px;line-height:0"><svg class="chev" width="14" height="9" viewBox="0 0 14 9"><path d="M1.5 1.5 L7 7 L12.5 1.5" stroke="#555" stroke-width="1.4" fill="none"/></svg></span></div>
<div class="t" style="left:37px;top:557px;font-size:18px;color:#000;">含多个时为从左第几个</div>
<div class="spn" style="left:220px;top:555px;width:58px;height:30px"><span class="num" style="right:31px;top:2px">1</span><div class="sp" style="right:3px;top:3px;width:21px;height:24px"><svg width="21" height="24" viewBox="0 0 21 24"><rect x="0.5" y="0.5" width="20" height="23" fill="#e9e9e9" stroke="#d4d4d4"/><line x1="1" y1="12.0" x2="20" y2="12.0" stroke="#c4c4c4" stroke-width="1.5"/><path d="M5.5 8.0 L10.5 2.0 L15.5 8.0 Z" fill="#111"/><path d="M5.5 16.0 L10.5 22.0 L15.5 16.0 Z" fill="#111"/></svg></div></div>
<svg class="rd" style="left:12.5px;top:594.5px" width="20" height="20" viewBox="0 0 20 20"><circle cx="10" cy="10" r="8.9" fill="#fff" stroke="#585858" stroke-width="1.8"/></svg>
<div class="t" style="left:37px;top:592px;font-size:18px;color:#000;">插入到左</div>
<div class="cb" style="left:113px;top:589px;width:54px;height:31px"><span style="position:absolute;right:6px;top:11px;line-height:0"><svg class="chev" width="14" height="9" viewBox="0 0 14 9"><path d="M1.5 1.5 L7 7 L12.5 1.5" stroke="#555" stroke-width="1.4" fill="none"/></svg></span></div>
<div class="t" style="left:173px;top:592px;font-size:18px;color:#000;">右</div>
<div class="cb" style="left:196px;top:589px;width:55px;height:31px"><span style="position:absolute;right:6px;top:11px;line-height:0"><svg class="chev" width="14" height="9" viewBox="0 0 14 9"><path d="M1.5 1.5 L7 7 L12.5 1.5" stroke="#555" stroke-width="1.4" fill="none"/></svg></span></div>
<div class="t" style="left:256px;top:592px;font-size:18px;color:#000;">为间</div>
<div class="t" style="left:37px;top:625px;font-size:18px;color:#000;">隔的字符串</div>
<div class="cb gray" style="left:131px;top:622px;width:53px;height:30px"><span style="position:absolute;left:5px;top:2px;font-size:18px;line-height:26px;color:#000">后</span><span style="position:absolute;right:6px;top:10px;line-height:0"><svg class="chev" width="14" height="9" viewBox="0 0 14 9"><path d="M1.5 1.5 L7 7 L12.5 1.5" stroke="#555" stroke-width="1.4" fill="none"/></svg></span></div>
<div class="ck" style="left:193px;top:629px"></div>
<div class="t" style="left:217px;top:625px;font-size:18px;color:#000;">含间隔符</div>
<div class="t" style="left:13px;top:662px;font-size:18px;color:#000;">补齐长度</div>
<div class="spn" style="left:88px;top:660px;width:73px;height:30px"><span class="num" style="right:31px;top:2px">8</span><div class="sp" style="right:3px;top:3px;width:21px;height:24px"><svg width="21" height="24" viewBox="0 0 21 24"><rect x="0.5" y="0.5" width="20" height="23" fill="#e9e9e9" stroke="#d4d4d4"/><line x1="1" y1="12.0" x2="20" y2="12.0" stroke="#c4c4c4" stroke-width="1.5"/><path d="M5.5 8.0 L10.5 2.0 L15.5 8.0 Z" fill="#111"/><path d="M5.5 16.0 L10.5 22.0 L15.5 16.0 Z" fill="#111"/></svg></div></div>
<div class="bt" style="left:165px;top:661px;width:125px;height:27px;line-height:24px;padding-top:1px;color:#000">获取列表最长</div>
<div class="t" style="left:319px;top:242px;font-size:19px;color:#000;font-weight:bold;-webkit-text-stroke:0.3px currentColor;"><span style="font-size:17.5px;letter-spacing:-0.4px">1.N.2.</span>替换</div>
<div class="ok" style="left:550px;top:246px;width:29px;height:18px;line-height:19px">Ok</div>
<svg class="rd" style="left:318.5px;top:273.5px" width="20" height="20" viewBox="0 0 20 20"><circle cx="10" cy="10" r="8.9" fill="#fff" stroke="#585858" stroke-width="1.8"/><circle cx="10" cy="10" r="5.2" fill="#333"/></svg>
<div class="t" style="left:343px;top:271px;font-size:18px;color:#000;">保持不变</div>
<svg class="rd" style="left:318.5px;top:305.5px" width="20" height="20" viewBox="0 0 20 20"><circle cx="10" cy="10" r="8.9" fill="#fff" stroke="#585858" stroke-width="1.8"/></svg>
<div class="t" style="left:343px;top:303px;font-size:18px;color:#000;">查找</div>
<div class="cb" style="left:384px;top:300px;width:197px;height:30px"><span style="position:absolute;right:6px;top:10px;line-height:0"><svg class="chev" width="14" height="9" viewBox="0 0 14 9"><path d="M1.5 1.5 L7 7 L12.5 1.5" stroke="#555" stroke-width="1.4" fill="none"/></svg></span></div>
<div class="t" style="left:343px;top:334px;font-size:18px;color:#000;">替换</div>
<div class="cb" style="left:384px;top:333px;width:197px;height:30px"><span style="position:absolute;right:6px;top:10px;line-height:0"><svg class="chev" width="14" height="9" viewBox="0 0 14 9"><path d="M1.5 1.5 L7 7 L12.5 1.5" stroke="#555" stroke-width="1.4" fill="none"/></svg></span></div>
<div class="t" style="left:386px;top:363px"><span style="color:#0000ff;text-decoration:underline;text-underline-offset:2px">云变量</span>快捷插入</div>
<svg style="position:absolute;left:522px;top:370px" width="8" height="12" viewBox="0 0 8 12"><path d="M1 1 L7 6 L1 11 Z" fill="#000"/></svg>
<div class="ck" style="left:343px;top:393px"></div>
<div class="t" style="left:368px;top:389px;font-size:18px;color:#000;">区分大小写</div>
<div class="bt" style="left:505px;top:389px;width:75px;height:27px;line-height:24px;padding-top:1px;color:#000">编辑器</div>
<div class="t" style="left:343px;top:418px;font-size:18px;color:#000;">查找替换多项内容时用"|"分隔</div>
<svg class="rd" style="left:318.5px;top:454.5px" width="20" height="20" viewBox="0 0 20 20"><circle cx="10" cy="10" r="8.9" fill="#fff" stroke="#585858" stroke-width="1.8"/></svg>
<div class="t" style="left:344px;top:452px;font-size:18px;color:#000;">替换以左</div>
<div class="cb" style="left:417px;top:449px;width:52px;height:30px"><span style="position:absolute;right:6px;top:10px;line-height:0"><svg class="chev" width="14" height="9" viewBox="0 0 14 9"><path d="M1.5 1.5 L7 7 L12.5 1.5" stroke="#555" stroke-width="1.4" fill="none"/></svg></span></div>
<div class="t" style="left:471px;top:452px;font-size:18px;color:#000;">右</div>
<div class="cb" style="left:492px;top:449px;width:52px;height:30px"><span style="position:absolute;right:6px;top:10px;line-height:0"><svg class="chev" width="14" height="9" viewBox="0 0 14 9"><path d="M1.5 1.5 L7 7 L12.5 1.5" stroke="#555" stroke-width="1.4" fill="none"/></svg></span></div>
<div class="t" style="left:547px;top:452px;font-size:18px;color:#000;">为间</div>
<div class="t" style="left:343px;top:481px;font-size:18px;color:#000;">隔的字符串为<span class="fc">:</span></div>
<div class="ck" style="left:489px;top:484px"></div>
<div class="t" style="left:513px;top:481px;font-size:18px;color:#000;">含间隔符</div>
<div class="cb" style="left:343px;top:510px;width:238px;height:30px"><span style="position:absolute;right:6px;top:10px;line-height:0"><svg class="chev" width="14" height="9" viewBox="0 0 14 9"><path d="M1.5 1.5 L7 7 L12.5 1.5" stroke="#555" stroke-width="1.4" fill="none"/></svg></span></div>
<div style="position:absolute;left:311px;top:546px;width:276px;height:149px;box-sizing:border-box;border:1px solid #b4b4b4;box-shadow:inset 1px 1px 0 #fff, 1px 1px 0 #fff;"></div>
<div class="t" style="left:319px;top:548px;font-size:18px;color:#0a8a0a;">[查找替换] 中的替换设置</div>
<div class="t" style="left:319px;top:579px;font-size:18px;color:#000;">替换第</div>
<div class="cb" style="left:377px;top:576px;width:99px;height:30px"><span style="position:absolute;left:5px;top:2px;font-size:17px;line-height:26px;color:#000">1~-1</span><span style="position:absolute;right:6px;top:10px;line-height:0"><svg class="chev" width="14" height="9" viewBox="0 0 14 9"><path d="M1.5 1.5 L7 7 L12.5 1.5" stroke="#555" stroke-width="1.4" fill="none"/></svg></span></div>
<div class="t" style="left:479px;top:579px;font-size:18px;color:#000;">次出现的</div>
<div class="q" style="left:555px;top:582px;width:20px;height:19px;line-height:19px">?</div>
<div class="t" style="left:319px;top:609px;font-size:18px;color:#000;">查找替换多项内容时<span class="fc">:</span></div>
<svg class="rd" style="left:318.5px;top:639.5px" width="20" height="20" viewBox="0 0 20 20"><circle cx="10" cy="10" r="8.9" fill="#fff" stroke="#585858" stroke-width="1.8"/><circle cx="10" cy="10" r="5.2" fill="#333"/></svg>
<div class="t" style="left:344px;top:637px;font-size:18px;color:#000;">同时查找并替换</div>
<div class="q" style="left:478px;top:640px;width:21px;height:19px;line-height:19px">?</div>
<svg class="rd" style="left:318.5px;top:666.5px" width="20" height="20" viewBox="0 0 20 20"><circle cx="10" cy="10" r="8.9" fill="#fff" stroke="#585858" stroke-width="1.8"/></svg>
<div class="t" style="left:344px;top:664px;font-size:18px;color:#000;">从左到右顺序查找并替换</div>
<div style="position:absolute;left:594px;top:253px;width:389px;height:443px;box-sizing:border-box;border:1px solid #d0d0d0;border-top:none;"></div>
<div class="t" style="left:606px;top:242px;font-size:19px;color:#000;font-weight:bold;-webkit-text-stroke:0.3px currentColor;"><span style="font-size:17.5px;letter-spacing:-0.4px">1.N.3.</span>删除与保留</div>
<div class="ok" style="left:943px;top:246px;width:29px;height:18px;line-height:19px">Ok</div>
<svg class="rd" style="left:605.5px;top:273.5px" width="20" height="20" viewBox="0 0 20 20"><circle cx="10" cy="10" r="8.9" fill="#fff" stroke="#585858" stroke-width="1.8"/><circle cx="10" cy="10" r="5.2" fill="#333"/></svg>
<div class="t" style="left:630px;top:271px;font-size:18px;color:#000;">保持不变</div>
<svg class="rd" style="left:605.5px;top:305.5px" width="20" height="20" viewBox="0 0 20 20"><circle cx="10" cy="10" r="8.9" fill="#fff" stroke="#585858" stroke-width="1.8"/></svg>
<div class="t" style="left:630px;top:303px;font-size:18px;color:#000;">清空文件名</div>
<svg class="rd" style="left:750.5px;top:305.5px" width="20" height="20" viewBox="0 0 20 20"><circle cx="10" cy="10" r="8.9" fill="#fff" stroke="#585858" stroke-width="1.8"/></svg>
<div class="t" style="left:775px;top:303px;font-size:18px;color:#000;">去除两端空格</div>
<svg class="rd" style="left:605.5px;top:338.5px" width="20" height="20" viewBox="0 0 20 20"><circle cx="10" cy="10" r="8.9" fill="#fff" stroke="#585858" stroke-width="1.8"/></svg>
<div class="t" style="left:630px;top:336px;font-size:18px;color:#000;">从位置</div>
<div class="spn" style="left:687px;top:334px;width:76px;height:31px"><span class="num" style="right:31px;top:2px">1</span><div class="sp" style="right:3px;top:3px;width:21px;height:25px"><svg width="21" height="25" viewBox="0 0 21 25"><rect x="0.5" y="0.5" width="20" height="24" fill="#e9e9e9" stroke="#d4d4d4"/><line x1="1" y1="12.5" x2="20" y2="12.5" stroke="#c4c4c4" stroke-width="1.5"/><path d="M5.5 8.5 L10.5 2.5 L15.5 8.5 Z" fill="#111"/><path d="M5.5 16.5 L10.5 22.5 L15.5 16.5 Z" fill="#111"/></svg></div></div>
<div class="cb gray" style="left:766px;top:333px;width:72px;height:30px"><span style="position:absolute;left:5px;top:2px;font-size:18px;line-height:26px;color:#000">删除</span><span style="position:absolute;right:6px;top:10px;line-height:0"><svg class="chev" width="14" height="9" viewBox="0 0 14 9"><path d="M1.5 1.5 L7 7 L12.5 1.5" stroke="#555" stroke-width="1.4" fill="none"/></svg></span></div>
<div class="spn" style="left:841px;top:334px;width:76px;height:31px"><span class="num" style="right:31px;top:2px">1</span><div class="sp" style="right:3px;top:3px;width:21px;height:25px"><svg width="21" height="25" viewBox="0 0 21 25"><rect x="0.5" y="0.5" width="20" height="24" fill="#e9e9e9" stroke="#d4d4d4"/><line x1="1" y1="12.5" x2="20" y2="12.5" stroke="#c4c4c4" stroke-width="1.5"/><path d="M5.5 8.5 L10.5 2.5 L15.5 8.5 Z" fill="#111"/><path d="M5.5 16.5 L10.5 22.5 L15.5 16.5 Z" fill="#111"/></svg></div></div>
<div class="t" style="left:919px;top:336px;font-size:18px;color:#000;">个字符</div>
<div class="ck" style="left:630px;top:371px"></div>
<div class="t" style="left:654px;top:367px;font-size:18px;color:#000;">从后计算</div>
<svg class="rd" style="left:605.5px;top:403.5px" width="20" height="20" viewBox="0 0 20 20"><circle cx="10" cy="10" r="8.9" fill="#fff" stroke="#585858" stroke-width="1.8"/></svg>
<div class="t" style="left:630px;top:401px;font-size:18px;color:#000;">以字符串</div>
<div class="cb" style="left:705px;top:399px;width:118px;height:30px"><span style="position:absolute;right:6px;top:10px;line-height:0"><svg class="chev" width="14" height="9" viewBox="0 0 14 9"><path d="M1.5 1.5 L7 7 L12.5 1.5" stroke="#555" stroke-width="1.4" fill="none"/></svg></span></div>
<div class="t" style="left:826px;top:401px;font-size:18px;color:#000;">为界剪裁</div>
<div class="cb gray" style="left:903px;top:397px;width:71px;height:31px"><span style="position:absolute;left:5px;top:2px;font-size:18px;line-height:26px;color:#000">后面</span><span style="position:absolute;right:6px;top:11px;line-height:0"><svg class="chev" width="14" height="9" viewBox="0 0 14 9"><path d="M1.5 1.5 L7 7 L12.5 1.5" stroke="#555" stroke-width="1.4" fill="none"/></svg></span></div>
<div class="ck" style="left:630px;top:437px"><svg width="19" height="19" viewBox="0 0 19 19"><path d="M3.5 9.5 L7.5 13.5 L15.5 4.5" stroke="#333" stroke-width="1.6" fill="none"/></svg></div>
<div class="t" style="left:654px;top:433px;font-size:18px;color:#000;">剪裁本身</div>
<div class="t" style="left:736px;top:433px;font-size:18px;color:#000;">含多个时为从左第几个</div>
<div class="spn" style="left:918px;top:432px;width:57px;height:30px"><span class="num" style="right:31px;top:2px">1</span><div class="sp" style="right:3px;top:3px;width:21px;height:24px"><svg width="21" height="24" viewBox="0 0 21 24"><rect x="0.5" y="0.5" width="20" height="23" fill="#e9e9e9" stroke="#d4d4d4"/><line x1="1" y1="12.0" x2="20" y2="12.0" stroke="#c4c4c4" stroke-width="1.5"/><path d="M5.5 8.0 L10.5 2.0 L15.5 8.0 Z" fill="#111"/><path d="M5.5 16.0 L10.5 22.0 L15.5 16.0 Z" fill="#111"/></svg></div></div>
<svg class="rd" style="left:605.5px;top:475.5px" width="20" height="20" viewBox="0 0 20 20"><circle cx="10" cy="10" r="8.9" fill="#fff" stroke="#585858" stroke-width="1.8"/></svg>
<div class="cb gray" style="left:630px;top:470px;width:71px;height:30px"><span style="position:absolute;left:5px;top:2px;font-size:18px;line-height:26px;color:#000">删除</span><span style="position:absolute;right:6px;top:10px;line-height:0"><svg class="chev" width="14" height="9" viewBox="0 0 14 9"><path d="M1.5 1.5 L7 7 L12.5 1.5" stroke="#555" stroke-width="1.4" fill="none"/></svg></span></div>
<div class="t" style="left:706px;top:472px;font-size:18px;color:#000;">以左</div>
<div class="cb" style="left:744px;top:471px;width:54px;height:30px"><span style="position:absolute;right:6px;top:10px;line-height:0"><svg class="chev" width="14" height="9" viewBox="0 0 14 9"><path d="M1.5 1.5 L7 7 L12.5 1.5" stroke="#555" stroke-width="1.4" fill="none"/></svg></span></div>
<div class="t" style="left:802px;top:472px;font-size:18px;color:#000;">右</div>
<div class="cb" style="left:823px;top:471px;width:55px;height:30px"><span style="position:absolute;right:6px;top:10px;line-height:0"><svg class="chev" width="14" height="9" viewBox="0 0 14 9"><path d="M1.5 1.5 L7 7 L12.5 1.5" stroke="#555" stroke-width="1.4" fill="none"/></svg></span></div>
<div class="t" style="left:884px;top:472px;font-size:18px;color:#000;">为间隔的字</div>
<div class="t" style="left:629px;top:504px;font-size:18px;color:#000;">符串</div>
<div class="ck" style="left:682px;top:507px"></div>
<div class="t" style="left:706px;top:504px;font-size:18px;color:#000;">含间隔符</div>
<svg class="rd" style="left:605.5px;top:539.5px" width="20" height="20" viewBox="0 0 20 20"><circle cx="10" cy="10" r="8.9" fill="#fff" stroke="#585858" stroke-width="1.8"/></svg>
<div class="t" style="left:629px;top:537px;font-size:18px;color:#000;">在文件名中</div>
<div class="cb gray" style="left:723px;top:534px;width:71px;height:30px"><span style="position:absolute;left:5px;top:2px;font-size:18px;line-height:26px;color:#000">删除</span><span style="position:absolute;right:6px;top:10px;line-height:0"><svg class="chev" width="14" height="9" viewBox="0 0 14 9"><path d="M1.5 1.5 L7 7 L12.5 1.5" stroke="#555" stroke-width="1.4" fill="none"/></svg></span></div>
<div class="t" style="left:801px;top:537px;font-size:18px;color:#000;">以下内容</div>
<div class="ck" style="left:630px;top:573px"></div>
<div class="t" style="left:654px;top:570px;font-size:18px;color:#000;">指定字符串</div>
<div class="cb" style="left:749px;top:568px;width:158px;height:30px"><span style="position:absolute;right:6px;top:10px;line-height:0"><svg class="chev" width="14" height="9" viewBox="0 0 14 9"><path d="M1.5 1.5 L7 7 L12.5 1.5" stroke="#555" stroke-width="1.4" fill="none"/></svg></span></div>
<div class="bt" style="left:910px;top:569px;width:65px;height:27px;line-height:24px;padding-top:1px;color:#000">编辑器</div>
<div class="ck" style="left:630px;top:604px"></div>
<div class="t" style="left:654px;top:601px;font-size:18px;color:#000;">指定字符集</div>
<div style="position:absolute;left:749px;top:602px;width:228px;height:55px;box-sizing:border-box;border:1px solid #7a7a7a;background:#fff;"></div>
<div style="position:absolute;left:950px;top:604px;width:25px;height:51px;box-sizing:border-box;background:#f0f0f0;"></div>
<svg style="position:absolute;left:955px;top:612px;overflow:visible" width="14" height="8" viewBox="0 0 14 8"><path d="M1.5 7 L7 1.5 L12.5 7" stroke="#b0b0b0" stroke-width="1.5" fill="none"/></svg>
<svg style="position:absolute;left:955px;top:637px;overflow:visible" width="14" height="8" viewBox="0 0 14 8"><path d="M1.5 1 L7 6.5 L12.5 1" stroke="#b0b0b0" stroke-width="1.5" fill="none"/></svg>
<div class="q" style="left:652px;top:633px;width:21px;height:18px;line-height:18px">?</div>
<div class="bt" style="left:678px;top:629px;width:65px;height:25px;line-height:22px;padding-top:1px;color:#000">编辑器</div>
<div style="position:absolute;left:630px;top:661px;width:345px;height:30px;box-sizing:border-box;background:#fff;border-top:1px solid #a0a0a0;border-left:1px solid #a0a0a0;"></div>
<div class="t" style="left:634px;top:663px;font-size:18px;color:#000;">请选择预设字符集</div>
<svg style="position:absolute;left:917px;top:670px;overflow:visible" width="14" height="14" viewBox="0 0 14 14"><path d="M2 2 L12 12 M12 2 L2 12" stroke="#111" stroke-width="2.2"/></svg>
<svg style="position:absolute;left:943px;top:674px;overflow:visible" width="26" height="6" viewBox="0 0 26 6"><circle cx="3" cy="3" r="2.4" fill="#111"/><circle cx="12" cy="3" r="2.4" fill="#111"/><circle cx="21" cy="3" r="2.4" fill="#111"/></svg>
<div style="position:absolute;left:988px;top:253px;width:312px;height:443px;box-sizing:border-box;border:1px solid #d0d0d0;border-top:none;"></div>
<div class="t" style="left:999px;top:242px;font-size:19px;color:#000;font-weight:bold;-webkit-text-stroke:0.3px currentColor;"><span style="font-size:17.5px;letter-spacing:-0.4px">1.N.4.</span>自动编号</div>
<div class="ok" style="left:1260px;top:246px;width:29px;height:18px;line-height:19px">Ok</div>
<svg class="rd" style="left:997.5px;top:273.5px" width="20" height="20" viewBox="0 0 20 20"><circle cx="10" cy="10" r="8.9" fill="#fff" stroke="#585858" stroke-width="1.8"/><circle cx="10" cy="10" r="5.2" fill="#333"/></svg>
<div class="t" style="left:1023px;top:271px;font-size:18px;color:#000;">保持不变</div>
<svg class="rd" style="left:997.5px;top:305.5px" width="20" height="20" viewBox="0 0 20 20"><circle cx="10" cy="10" r="8.9" fill="#fff" stroke="#585858" stroke-width="1.8"/></svg>
<div class="t" style="left:1023px;top:303px;font-size:18px;color:#000;">插入位置</div>
<div class="spn" style="left:1098px;top:301px;width:70px;height:30px"><span class="num" style="right:31px;top:2px">1</span><div class="sp" style="right:3px;top:3px;width:21px;height:24px"><svg width="21" height="24" viewBox="0 0 21 24"><rect x="0.5" y="0.5" width="20" height="23" fill="#e9e9e9" stroke="#d4d4d4"/><line x1="1" y1="12.0" x2="20" y2="12.0" stroke="#c4c4c4" stroke-width="1.5"/><path d="M5.5 8.0 L10.5 2.0 L15.5 8.0 Z" fill="#111"/><path d="M5.5 16.0 L10.5 22.0 L15.5 16.0 Z" fill="#111"/></svg></div></div>
<div class="ck" style="left:1180px;top:307px"></div>
<div class="t" style="left:1204px;top:303px;font-size:18px;color:#000;">从后计算</div>
<svg class="rd" style="left:997.5px;top:338.5px" width="20" height="20" viewBox="0 0 20 20"><circle cx="10" cy="10" r="8.9" fill="#fff" stroke="#585858" stroke-width="1.8"/></svg>
<div class="t" style="left:1023px;top:336px;font-size:18px;color:#000;">插入到字符串</div>
<div class="cb" style="left:1135px;top:334px;width:101px;height:31px"><span style="position:absolute;right:6px;top:11px;line-height:0"><svg class="chev" width="14" height="9" viewBox="0 0 14 9"><path d="M1.5 1.5 L7 7 L12.5 1.5" stroke="#555" stroke-width="1.4" fill="none"/></svg></span></div>
<div class="cb gray" style="left:1239px;top:334px;width:53px;height:31px"><span style="position:absolute;left:5px;top:2px;font-size:18px;line-height:26px;color:#000">后</span><span style="position:absolute;right:6px;top:11px;line-height:0"><svg class="chev" width="14" height="9" viewBox="0 0 14 9"><path d="M1.5 1.5 L7 7 L12.5 1.5" stroke="#555" stroke-width="1.4" fill="none"/></svg></span></div>
<div class="t" style="left:1023px;top:369px;font-size:18px;color:#000;">含多个时为从左第几个</div>
<div class="spn" style="left:1206px;top:369px;width:58px;height:30px"><span class="num" style="right:31px;top:2px">1</span><div class="sp" style="right:3px;top:3px;width:21px;height:24px"><svg width="21" height="24" viewBox="0 0 21 24"><rect x="0.5" y="0.5" width="20" height="23" fill="#e9e9e9" stroke="#d4d4d4"/><line x1="1" y1="12.0" x2="20" y2="12.0" stroke="#c4c4c4" stroke-width="1.5"/><path d="M5.5 8.0 L10.5 2.0 L15.5 8.0 Z" fill="#111"/><path d="M5.5 16.0 L10.5 22.0 L15.5 16.0 Z" fill="#111"/></svg></div></div>
<svg class="rd" style="left:997.5px;top:408.5px" width="20" height="20" viewBox="0 0 20 20"><circle cx="10" cy="10" r="8.9" fill="#fff" stroke="#585858" stroke-width="1.8"/></svg>
<div class="t" style="left:1023px;top:406px;font-size:18px;color:#000;">表达式</div>
<div class="cb" style="left:1085px;top:403px;width:207px;height:31px"><span style="position:absolute;left:5px;top:2px;font-size:18px;line-height:26px;color:#000">&lt;#&gt;</span><span style="position:absolute;right:6px;top:11px;line-height:0"><svg class="chev" width="14" height="9" viewBox="0 0 14 9"><path d="M1.5 1.5 L7 7 L12.5 1.5" stroke="#555" stroke-width="1.4" fill="none"/></svg></span></div>
<div class="q" style="left:1023px;top:436px;width:20px;height:19px;line-height:19px">?</div>
<div class="t" style="left:1085px;top:433px"><span style="color:#0000ff;text-decoration:underline;text-underline-offset:2px">云变量</span>快捷插入</div>
<svg style="position:absolute;left:1220px;top:440px" width="8" height="12" viewBox="0 0 8 12"><path d="M1 1 L7 6 L1 11 Z" fill="#000"/></svg>
<div class="t" style="left:1248px;top:433px;font-size:18px;color:#000;">&lt;#&gt;</div>
<div style="position:absolute;left:991px;top:462px;width:305px;height:233px;box-sizing:border-box;border:1px solid #b4b4b4;box-shadow:inset 1px 1px 0 #fff, 1px 1px 0 #fff;"></div>
<div class="t" style="left:998px;top:464px;font-size:18px;color:#0a8a0a;">[自动编号] 设置</div>
<div class="cb gray" style="left:999px;top:492px;width:85px;height:30px"><span style="position:absolute;left:5px;top:2px;font-size:18px;line-height:26px;color:#000">数字</span><span style="position:absolute;right:6px;top:10px;line-height:0"><svg class="chev" width="14" height="9" viewBox="0 0 14 9"><path d="M1.5 1.5 L7 7 L12.5 1.5" stroke="#555" stroke-width="1.4" fill="none"/></svg></span></div>
<div class="q" style="left:1088px;top:498px;width:20px;height:18px;line-height:18px">?</div>
<div class="bt dis" style="left:1114px;top:493px;width:66px;height:28px;line-height:25px;padding-top:1px;color:#9c9c9c">赋值到</div>
<div style="position:absolute;left:1182px;top:491px;width:108px;height:32px;box-sizing:border-box;background:#cfcfcf;border:1px solid #c4c4c4;"></div>
<div style="position:absolute;left:1186px;top:495px;width:75px;height:24px;box-sizing:border-box;background:#c4c4c4;"></div>
<div class="t" style="left:1189px;top:496px;font-size:15.5px;color:#9a9a9a;">&lt;USER0&gt;</div>
<svg style="position:absolute;left:1266px;top:503px;overflow:visible" width="14" height="9" viewBox="0 0 14 9"><path d="M1.5 1.5 L7 7 L12.5 1.5" stroke="#a8a8a8" stroke-width="1.4" fill="none"/></svg>
<div class="t" style="left:998px;top:529px;font-size:18px;color:#000;">始于</div>
<div class="spn" style="left:1035px;top:527px;width:75px;height:30px"><span class="num" style="right:31px;top:2px">1</span><div class="sp" style="right:3px;top:3px;width:21px;height:24px"><svg width="21" height="24" viewBox="0 0 21 24"><rect x="0.5" y="0.5" width="20" height="23" fill="#e9e9e9" stroke="#d4d4d4"/><line x1="1" y1="12.0" x2="20" y2="12.0" stroke="#c4c4c4" stroke-width="1.5"/><path d="M5.5 8.0 L10.5 2.0 L15.5 8.0 Z" fill="#111"/><path d="M5.5 16.0 L10.5 22.0 L15.5 16.0 Z" fill="#111"/></svg></div></div>
<div class="ck" style="left:1114px;top:532px"></div>
<div class="t" style="left:1139px;top:529px;font-size:18px;color:#000;">超出</div>
<div class="spn" style="left:1177px;top:528px;width:73px;height:30px"><span class="num" style="right:31px;top:2px">8</span><div class="sp" style="right:3px;top:3px;width:21px;height:24px"><svg width="21" height="24" viewBox="0 0 21 24"><rect x="0.5" y="0.5" width="20" height="23" fill="#e9e9e9" stroke="#d4d4d4"/><line x1="1" y1="12.0" x2="20" y2="12.0" stroke="#c4c4c4" stroke-width="1.5"/><path d="M5.5 8.0 L10.5 2.0 L15.5 8.0 Z" fill="#111"/><path d="M5.5 16.0 L10.5 22.0 L15.5 16.0 Z" fill="#111"/></svg></div></div>
<div class="t" style="left:1253px;top:529px;font-size:18px;color:#000;">重置</div>
<div class="t" style="left:998px;top:562px;font-size:18px;color:#000;">增量</div>
<div class="spn" style="left:1035px;top:561px;width:75px;height:28px"><span class="num" style="right:31px;top:1px">1</span><div class="sp" style="right:3px;top:3px;width:21px;height:22px"><svg width="21" height="22" viewBox="0 0 21 22"><rect x="0.5" y="0.5" width="20" height="21" fill="#e9e9e9" stroke="#d4d4d4"/><line x1="1" y1="11.0" x2="20" y2="11.0" stroke="#c4c4c4" stroke-width="1.5"/><path d="M5.5 7.0 L10.5 1.0 L15.5 7.0 Z" fill="#111"/><path d="M5.5 15.0 L10.5 21.0 L15.5 15.0 Z" fill="#111"/></svg></div></div>
<div class="ck" style="left:1114px;top:565px"><svg width="19" height="19" viewBox="0 0 19 19"><path d="M3.5 9.5 L7.5 13.5 L15.5 4.5" stroke="#333" stroke-width="1.6" fill="none"/></svg></div>
<div class="t" style="left:1139px;top:562px;font-size:18px;color:#000;">未复选行不计数</div>
<div class="q" style="left:1267px;top:566px;width:21px;height:18px;line-height:18px">?</div>
<div class="t" style="left:998px;top:595px;font-size:18px;color:#000;">位数</div>
<div class="spn" style="left:1035px;top:593px;width:75px;height:29px"><span class="num" style="right:31px;top:1px">1</span><div class="sp" style="right:3px;top:3px;width:21px;height:23px"><svg width="21" height="23" viewBox="0 0 21 23"><rect x="0.5" y="0.5" width="20" height="22" fill="#e9e9e9" stroke="#d4d4d4"/><line x1="1" y1="11.5" x2="20" y2="11.5" stroke="#c4c4c4" stroke-width="1.5"/><path d="M5.5 7.5 L10.5 1.5 L15.5 7.5 Z" fill="#111"/><path d="M5.5 15.5 L10.5 21.5 L15.5 15.5 Z" fill="#111"/></svg></div></div>
<div class="ck" style="left:1114px;top:598px"></div>
<div class="t" style="left:1139px;top:595px;font-size:18px;color:#000;">按路径单独计数</div>
<div class="q" style="left:1267px;top:598px;width:21px;height:18px;line-height:18px">?</div>
<div class="t" style="left:998px;top:628px;font-size:18px;color:#000;">分组</div>
<div class="spn" style="left:1035px;top:626px;width:75px;height:30px"><span class="num" style="right:31px;top:2px">1</span><div class="sp" style="right:3px;top:3px;width:21px;height:24px"><svg width="21" height="24" viewBox="0 0 21 24"><rect x="0.5" y="0.5" width="20" height="23" fill="#e9e9e9" stroke="#d4d4d4"/><line x1="1" y1="12.0" x2="20" y2="12.0" stroke="#c4c4c4" stroke-width="1.5"/><path d="M5.5 8.0 L10.5 2.0 L15.5 8.0 Z" fill="#111"/><path d="M5.5 16.0 L10.5 22.0 L15.5 16.0 Z" fill="#111"/></svg></div></div>
<div class="ck" style="left:1114px;top:631px"></div>
<div class="t" style="left:1139px;top:628px;font-size:18px;color:#000;">排除</div>
<div class="cb" style="left:1179px;top:625px;width:85px;height:30px"><span style="position:absolute;right:6px;top:10px;line-height:0"><svg class="chev" width="14" height="9" viewBox="0 0 14 9"><path d="M1.5 1.5 L7 7 L12.5 1.5" stroke="#555" stroke-width="1.4" fill="none"/></svg></span></div>
<div class="q" style="left:1267px;top:631px;width:21px;height:19px;line-height:19px">?</div>
<div class="t" style="left:998px;top:662px;font-size:18px;color:#000;">补位符</div>
<svg class="rd" style="left:1061.5px;top:664.5px" width="20" height="20" viewBox="0 0 20 20"><circle cx="10" cy="10" r="8.9" fill="#fff" stroke="#585858" stroke-width="1.8"/><circle cx="10" cy="10" r="5.2" fill="#333"/></svg>
<div class="t" style="left:1088px;top:662px;font-size:18px;color:#000;">自动</div>
<svg class="rd" style="left:1129.5px;top:664.5px" width="20" height="20" viewBox="0 0 20 20"><circle cx="10" cy="10" r="8.9" fill="#fff" stroke="#585858" stroke-width="1.8"/></svg>
<div class="t" style="left:1155px;top:662px;font-size:18px;color:#000;">自定义</div>
<div class="ed" style="left:1212px;top:659px;width:50px;height:31px;"><span style="position:absolute;left:4px;top:2px"><span style="font-size:16px">0</span></span></div>
<div class="q" style="left:1267px;top:666px;width:21px;height:18px;line-height:18px">?</div>
<div class="t" style="left:1315px;top:242px;font-size:19px;color:#000;font-weight:bold;-webkit-text-stroke:0.3px currentColor;"><span style="font-size:17.5px;letter-spacing:-0.4px">1.N.5.</span>移动</div>
<div class="ok" style="left:1548px;top:246px;width:28px;height:18px;line-height:19px">Ok</div>
<svg class="rd" style="left:1314.5px;top:273.5px" width="20" height="20" viewBox="0 0 20 20"><circle cx="10" cy="10" r="8.9" fill="#fff" stroke="#585858" stroke-width="1.8"/><circle cx="10" cy="10" r="5.2" fill="#333"/></svg>
<div class="t" style="left:1339px;top:271px;font-size:18px;color:#000;">保持不变</div>
<svg class="rd" style="left:1314.5px;top:305.5px" width="20" height="20" viewBox="0 0 20 20"><circle cx="10" cy="10" r="8.9" fill="#fff" stroke="#585858" stroke-width="1.8"/></svg>
<div class="t" style="left:1339px;top:303px;font-size:18px;color:#000;">子字符串<span class="fc">:</span>从位置</div>
<div class="spn" style="left:1485px;top:300px;width:59px;height:30px"><span class="num" style="right:31px;top:2px">1</span><div class="sp" style="right:3px;top:3px;width:21px;height:24px"><svg width="21" height="24" viewBox="0 0 21 24"><rect x="0.5" y="0.5" width="20" height="23" fill="#e9e9e9" stroke="#d4d4d4"/><line x1="1" y1="12.0" x2="20" y2="12.0" stroke="#c4c4c4" stroke-width="1.5"/><path d="M5.5 8.0 L10.5 2.0 L15.5 8.0 Z" fill="#111"/><path d="M5.5 16.0 L10.5 22.0 L15.5 16.0 Z" fill="#111"/></svg></div></div>
<div class="t" style="left:1547px;top:303px;font-size:18px;color:#000;">取</div>
<div class="t" style="left:1339px;top:335px;font-size:18px;color:#000;">字符数</div>
<div class="spn" style="left:1395px;top:332px;width:63px;height:31px"><span class="num" style="right:31px;top:2px">1</span><div class="sp" style="right:3px;top:3px;width:21px;height:25px"><svg width="21" height="25" viewBox="0 0 21 25"><rect x="0.5" y="0.5" width="20" height="24" fill="#e9e9e9" stroke="#d4d4d4"/><line x1="1" y1="12.5" x2="20" y2="12.5" stroke="#c4c4c4" stroke-width="1.5"/><path d="M5.5 8.5 L10.5 2.5 L15.5 8.5 Z" fill="#111"/><path d="M5.5 16.5 L10.5 22.5 L15.5 16.5 Z" fill="#111"/></svg></div></div>
<div class="ck" style="left:1470px;top:338px"></div>
<div class="t" style="left:1494px;top:335px;font-size:18px;color:#000;">从后计算</div>
<svg class="rd" style="left:1314.5px;top:369.5px" width="20" height="20" viewBox="0 0 20 20"><circle cx="10" cy="10" r="8.9" fill="#fff" stroke="#585858" stroke-width="1.8"/></svg>
<div class="t" style="left:1339px;top:367px;font-size:18px;color:#000;">子字符串<span class="fc">:</span>左</div>
<div class="cb" style="left:1449px;top:366px;width:51px;height:30px"><span style="position:absolute;right:6px;top:10px;line-height:0"><svg class="chev" width="14" height="9" viewBox="0 0 14 9"><path d="M1.5 1.5 L7 7 L12.5 1.5" stroke="#555" stroke-width="1.4" fill="none"/></svg></span></div>
<div class="t" style="left:1505px;top:367px;font-size:18px;color:#000;">右</div>
<div class="cb" style="left:1527px;top:366px;width:52px;height:30px"><span style="position:absolute;right:6px;top:10px;line-height:0"><svg class="chev" width="14" height="9" viewBox="0 0 14 9"><path d="M1.5 1.5 L7 7 L12.5 1.5" stroke="#555" stroke-width="1.4" fill="none"/></svg></span></div>
<div class="t" style="left:1339px;top:400px;font-size:18px;color:#000;">为间隔的字符串</div>
<div class="ck" style="left:1480px;top:404px"></div>
<div class="t" style="left:1504px;top:400px;font-size:18px;color:#000;">含间隔符</div>
<svg class="rd" style="left:1314.5px;top:434.5px" width="20" height="20" viewBox="0 0 20 20"><circle cx="10" cy="10" r="8.9" fill="#fff" stroke="#585858" stroke-width="1.8"/></svg>
<div class="t" style="left:1339px;top:432px;font-size:18px;color:#000;">子字符串<span class="fc">:</span></div>
<div class="cb" style="left:1434px;top:430px;width:145px;height:31px"><span style="position:absolute;right:6px;top:11px;line-height:0"><svg class="chev" width="14" height="9" viewBox="0 0 14 9"><path d="M1.5 1.5 L7 7 L12.5 1.5" stroke="#555" stroke-width="1.4" fill="none"/></svg></span></div>
<div class="cb gray" style="left:1315px;top:465px;width:71px;height:30px"><span style="position:absolute;left:5px;top:2px;font-size:18px;line-height:26px;color:#000">向右</span><span style="position:absolute;right:6px;top:10px;line-height:0"><svg class="chev" width="14" height="9" viewBox="0 0 14 9"><path d="M1.5 1.5 L7 7 L12.5 1.5" stroke="#555" stroke-width="1.4" fill="none"/></svg></span></div>
<div class="t" style="left:1390px;top:467px;font-size:18px;color:#000;">移动</div>
<div class="spn" style="left:1429px;top:465px;width:70px;height:31px"><span class="num" style="right:31px;top:2px">1</span><div class="sp" style="right:3px;top:3px;width:21px;height:25px"><svg width="21" height="25" viewBox="0 0 21 25"><rect x="0.5" y="0.5" width="20" height="24" fill="#e9e9e9" stroke="#d4d4d4"/><line x1="1" y1="12.5" x2="20" y2="12.5" stroke="#c4c4c4" stroke-width="1.5"/><path d="M5.5 8.5 L10.5 2.5 L15.5 8.5 Z" fill="#111"/><path d="M5.5 16.5 L10.5 22.5 L15.5 16.5 Z" fill="#111"/></svg></div></div>
<div class="t" style="left:1503px;top:467px;font-size:18px;color:#000;">个字符</div>
<div style="position:absolute;left:1307px;top:502px;width:276px;height:1px;box-sizing:border-box;background:#d9d9d9;"></div>
<div style="position:absolute;left:1307px;top:505px;width:276px;height:3px;box-sizing:border-box;background:linear-gradient(to right,#e8e8e8 0%,#888 30%,#111 60%,#666 85%,#e0e0e0 100%);"></div>
<div style="position:absolute;left:1304px;top:517px;width:10px;height:1px;box-sizing:border-box;background:#d9d9d9;"></div>
<div style="position:absolute;left:1456px;top:517px;width:90px;height:1px;box-sizing:border-box;background:#d9d9d9;"></div>
<div class="t" style="left:1315px;top:505px;font-size:19px;color:#000;font-weight:bold;-webkit-text-stroke:0.3px currentColor;"><span style="font-size:17.5px;letter-spacing:-0.4px">1.N.6.</span>字母大小写</div>
<div class="ok" style="left:1547px;top:510px;width:29px;height:18px;line-height:19px">Ok</div>
<svg class="rd" style="left:1314.5px;top:537.5px" width="20" height="20" viewBox="0 0 20 20"><circle cx="10" cy="10" r="8.9" fill="#fff" stroke="#585858" stroke-width="1.8"/><circle cx="10" cy="10" r="5.2" fill="#333"/></svg>
<div class="t" style="left:1340px;top:535px;font-size:18px;color:#000;">保持不变</div>
<svg class="rd" style="left:1428.5px;top:537.5px" width="20" height="20" viewBox="0 0 20 20"><circle cx="10" cy="10" r="8.9" fill="#fff" stroke="#585858" stroke-width="1.8"/></svg>
<div class="cb gray" style="left:1455px;top:533px;width:123px;height:30px"><span style="position:absolute;left:5px;top:2px;font-size:18px;line-height:26px;color:#000">全部大写</span><span style="position:absolute;right:6px;top:10px;line-height:0"><svg class="chev" width="14" height="9" viewBox="0 0 14 9"><path d="M1.5 1.5 L7 7 L12.5 1.5" stroke="#555" stroke-width="1.4" fill="none"/></svg></span></div>
<div class="t" style="left:1315px;top:569px;font-size:18px;color:#000;">例外</div>
<div class="ed" style="left:1354px;top:567px;width:224px;height:30px;"><span style="position:absolute;left:4px;top:2px"></span></div>
<div style="position:absolute;left:1307px;top:602px;width:277px;height:93px;box-sizing:border-box;border:1px solid #b4b4b4;box-shadow:inset 1px 1px 0 #fff, 1px 1px 0 #fff;"></div>
<div class="t" style="left:1315px;top:604px;font-size:18px;color:#0a8a0a;">[单词分隔符] 设置</div>
<div class="q" style="left:1465px;top:606px;width:21px;height:19px;line-height:19px">?</div>
<svg class="rd" style="left:1314.5px;top:636.5px" width="20" height="20" viewBox="0 0 20 20"><circle cx="10" cy="10" r="8.9" fill="#fff" stroke="#585858" stroke-width="1.8"/><circle cx="10" cy="10" r="5.2" fill="#333"/></svg>
<div class="t" style="left:1340px;top:634px;font-size:18px;color:#000;">指定字符或字符串</div>
<div class="cb" style="left:1488px;top:631px;width:90px;height:31px"><span style="position:absolute;right:6px;top:11px;line-height:0"><svg class="chev" width="14" height="9" viewBox="0 0 14 9"><path d="M1.5 1.5 L7 7 L12.5 1.5" stroke="#555" stroke-width="1.4" fill="none"/></svg></span></div>
<svg class="rd" style="left:1314.5px;top:666.5px" width="20" height="20" viewBox="0 0 20 20"><circle cx="10" cy="10" r="8.9" fill="#fff" stroke="#585858" stroke-width="1.8"/></svg>
<div class="t" style="left:1340px;top:664px;font-size:18px;color:#000;">非数字和字母</div>
<svg class="rd" style="left:1460.5px;top:666.5px" width="20" height="20" viewBox="0 0 20 20"><circle cx="10" cy="10" r="8.9" fill="#fff" stroke="#585858" stroke-width="1.8"/></svg>
<div class="t" style="left:1485px;top:664px;font-size:18px;color:#000;">非字母</div>
<div style="position:absolute;left:81px;top:699px;width:1428px;height:13px;box-sizing:border-box;border:2px solid #1a7ad6;border-radius:3px;background:#f0f0f0;"></div>
<svg style="position:absolute;left:103px;top:704px;overflow:visible" width="1384" height="2" viewBox="0 0 1384 2"><circle cx="1.0" cy="1" r="1.05" fill="#2ee82e"/><circle cx="5.5" cy="1" r="1.05" fill="#2ee82e"/><circle cx="10.0" cy="1" r="1.05" fill="#2ee82e"/><circle cx="14.5" cy="1" r="1.05" fill="#2ee82e"/><circle cx="19.0" cy="1" r="1.05" fill="#2ee82e"/><circle cx="23.5" cy="1" r="1.05" fill="#2ee82e"/><circle cx="28.0" cy="1" r="1.05" fill="#2ee82e"/><circle cx="32.5" cy="1" r="1.05" fill="#2ee82e"/><circle cx="37.0" cy="1" r="1.05" fill="#2ee82e"/><circle cx="41.5" cy="1" r="1.05" fill="#2ee82e"/><circle cx="46.0" cy="1" r="1.05" fill="#2ee82e"/><circle cx="50.5" cy="1" r="1.05" fill="#2ee82e"/><circle cx="55.0" cy="1" r="1.05" fill="#2ee82e"/><circle cx="59.5" cy="1" r="1.05" fill="#2ee82e"/><circle cx="64.0" cy="1" r="1.05" fill="#2ee82e"/><circle cx="68.5" cy="1" r="1.05" fill="#2ee82e"/><circle cx="73.0" cy="1" r="1.05" fill="#2ee82e"/><circle cx="77.5" cy="1" r="1.05" fill="#2ee82e"/><circle cx="82.0" cy="1" r="1.05" fill="#2ee82e"/><circle cx="86.5" cy="1" r="1.05" fill="#2ee82e"/><circle cx="91.0" cy="1" r="1.05" fill="#2ee82e"/><circle cx="95.5" cy="1" r="1.05" fill="#2ee82e"/><circle cx="100.0" cy="1" r="1.05" fill="#2ee82e"/><circle cx="104.5" cy="1" r="1.05" fill="#2ee82e"/><circle cx="109.0" cy="1" r="1.05" fill="#2ee82e"/><circle cx="113.5" cy="1" r="1.05" fill="#2ee82e"/><circle cx="118.0" cy="1" r="1.05" fill="#2ee82e"/><circle cx="122.5" cy="1" r="1.05" fill="#2ee82e"/><circle cx="127.0" cy="1" r="1.05" fill="#2ee82e"/><circle cx="131.5" cy="1" r="1.05" fill="#2ee82e"/><circle cx="136.0" cy="1" r="1.05" fill="#2ee82e"/><circle cx="140.5" cy="1" r="1.05" fill="#2ee82e"/><circle cx="145.0" cy="1" r="1.05" fill="#2ee82e"/><circle cx="149.5" cy="1" r="1.05" fill="#2ee82e"/><circle cx="154.0" cy="1" r="1.05" fill="#2ee82e"/><circle cx="158.5" cy="1" r="1.05" fill="#2ee82e"/><circle cx="163.0" cy="1" r="1.05" fill="#2ee82e"/><circle cx="167.5" cy="1" r="1.05" fill="#2ee82e"/><circle cx="172.0" cy="1" r="1.05" fill="#2ee82e"/><circle cx="176.5" cy="1" r="1.05" fill="#2ee82e"/><circle cx="181.0" cy="1" r="1.05" fill="#2ee82e"/><circle cx="185.5" cy="1" r="1.05" fill="#2ee82e"/><circle cx="190.0" cy="1" r="1.05" fill="#2ee82e"/><circle cx="194.5" cy="1" r="1.05" fill="#2ee82e"/><circle cx="199.0" cy="1" r="1.05" fill="#2ee82e"/><circle cx="203.5" cy="1" r="1.05" fill="#2ee82e"/><circle cx="208.0" cy="1" r="1.05" fill="#2ee82e"/><circle cx="212.5" cy="1" r="1.05" fill="#2ee82e"/><circle cx="217.0" cy="1" r="1.05" fill="#2ee82e"/><circle cx="221.5" cy="1" r="1.05" fill="#2ee82e"/><circle cx="226.0" cy="1" r="1.05" fill="#2ee82e"/><circle cx="230.5" cy="1" r="1.05" fill="#2ee82e"/><circle cx="235.0" cy="1" r="1.05" fill="#2ee82e"/><circle cx="239.5" cy="1" r="1.05" fill="#2ee82e"/><circle cx="244.0" cy="1" r="1.05" fill="#2ee82e"/><circle cx="248.5" cy="1" r="1.05" fill="#2ee82e"/><circle cx="253.0" cy="1" r="1.05" fill="#2ee82e"/><circle cx="257.5" cy="1" r="1.05" fill="#2ee82e"/><circle cx="262.0" cy="1" r="1.05" fill="#2ee82e"/><circle cx="266.5" cy="1" r="1.05" fill="#2ee82e"/><circle cx="271.0" cy="1" r="1.05" fill="#2ee82e"/><circle cx="275.5" cy="1" r="1.05" fill="#2ee82e"/><circle cx="280.0" cy="1" r="1.05" fill="#2ee82e"/><circle cx="284.5" cy="1" r="1.05" fill="#2ee82e"/><circle cx="289.0" cy="1" r="1.05" fill="#2ee82e"/><circle cx="293.5" cy="1" r="1.05" fill="#2ee82e"/><circle cx="298.0" cy="1" r="1.05" fill="#2ee82e"/><circle cx="302.5" cy="1" r="1.05" fill="#2ee82e"/><circle cx="307.0" cy="1" r="1.05" fill="#2ee82e"/><circle cx="311.5" cy="1" r="1.05" fill="#2ee82e"/><circle cx="316.0" cy="1" r="1.05" fill="#2ee82e"/><circle cx="320.5" cy="1" r="1.05" fill="#2ee82e"/><circle cx="325.0" cy="1" r="1.05" fill="#2ee82e"/><circle cx="329.5" cy="1" r="1.05" fill="#2ee82e"/><circle cx="334.0" cy="1" r="1.05" fill="#2ee82e"/><circle cx="338.5" cy="1" r="1.05" fill="#2ee82e"/><circle cx="343.0" cy="1" r="1.05" fill="#2ee82e"/><circle cx="347.5" cy="1" r="1.05" fill="#2ee82e"/><circle cx="352.0" cy="1" r="1.05" fill="#2ee82e"/><circle cx="356.5" cy="1" r="1.05" fill="#2ee82e"/><circle cx="361.0" cy="1" r="1.05" fill="#2ee82e"/><circle cx="365.5" cy="1" r="1.05" fill="#2ee82e"/><circle cx="370.0" cy="1" r="1.05" fill="#2ee82e"/><circle cx="374.5" cy="1" r="1.05" fill="#2ee82e"/><circle cx="379.0" cy="1" r="1.05" fill="#2ee82e"/><circle cx="383.5" cy="1" r="1.05" fill="#2ee82e"/><circle cx="388.0" cy="1" r="1.05" fill="#2ee82e"/><circle cx="392.5" cy="1" r="1.05" fill="#2ee82e"/><circle cx="397.0" cy="1" r="1.05" fill="#2ee82e"/><circle cx="401.5" cy="1" r="1.05" fill="#2ee82e"/><circle cx="406.0" cy="1" r="1.05" fill="#2ee82e"/><circle cx="410.5" cy="1" r="1.05" fill="#2ee82e"/><circle cx="415.0" cy="1" r="1.05" fill="#2ee82e"/><circle cx="419.5" cy="1" r="1.05" fill="#2ee82e"/><circle cx="424.0" cy="1" r="1.05" fill="#2ee82e"/><circle cx="428.5" cy="1" r="1.05" fill="#2ee82e"/><circle cx="433.0" cy="1" r="1.05" fill="#2ee82e"/><circle cx="437.5" cy="1" r="1.05" fill="#2ee82e"/><circle cx="442.0" cy="1" r="1.05" fill="#2ee82e"/><circle cx="446.5" cy="1" r="1.05" fill="#2ee82e"/><circle cx="451.0" cy="1" r="1.05" fill="#2ee82e"/><circle cx="455.5" cy="1" r="1.05" fill="#2ee82e"/><circle cx="460.0" cy="1" r="1.05" fill="#2ee82e"/><circle cx="464.5" cy="1" r="1.05" fill="#2ee82e"/><circle cx="469.0" cy="1" r="1.05" fill="#2ee82e"/><circle cx="473.5" cy="1" r="1.05" fill="#2ee82e"/><circle cx="478.0" cy="1" r="1.05" fill="#2ee82e"/><circle cx="482.5" cy="1" r="1.05" fill="#2ee82e"/><circle cx="487.0" cy="1" r="1.05" fill="#2ee82e"/><circle cx="491.5" cy="1" r="1.05" fill="#2ee82e"/><circle cx="496.0" cy="1" r="1.05" fill="#2ee82e"/><circle cx="500.5" cy="1" r="1.05" fill="#2ee82e"/><circle cx="505.0" cy="1" r="1.05" fill="#2ee82e"/><circle cx="509.5" cy="1" r="1.05" fill="#2ee82e"/><circle cx="514.0" cy="1" r="1.05" fill="#2ee82e"/><circle cx="518.5" cy="1" r="1.05" fill="#2ee82e"/><circle cx="523.0" cy="1" r="1.05" fill="#2ee82e"/><circle cx="527.5" cy="1" r="1.05" fill="#2ee82e"/><circle cx="532.0" cy="1" r="1.05" fill="#2ee82e"/><circle cx="536.5" cy="1" r="1.05" fill="#2ee82e"/><circle cx="541.0" cy="1" r="1.05" fill="#2ee82e"/><circle cx="545.5" cy="1" r="1.05" fill="#2ee82e"/><circle cx="550.0" cy="1" r="1.05" fill="#2ee82e"/><circle cx="554.5" cy="1" r="1.05" fill="#2ee82e"/><circle cx="559.0" cy="1" r="1.05" fill="#2ee82e"/><circle cx="563.5" cy="1" r="1.05" fill="#2ee82e"/><circle cx="568.0" cy="1" r="1.05" fill="#2ee82e"/><circle cx="572.5" cy="1" r="1.05" fill="#2ee82e"/><circle cx="577.0" cy="1" r="1.05" fill="#2ee82e"/><circle cx="581.5" cy="1" r="1.05" fill="#2ee82e"/><circle cx="586.0" cy="1" r="1.05" fill="#2ee82e"/><circle cx="590.5" cy="1" r="1.05" fill="#2ee82e"/><circle cx="595.0" cy="1" r="1.05" fill="#2ee82e"/><circle cx="599.5" cy="1" r="1.05" fill="#2ee82e"/><circle cx="604.0" cy="1" r="1.05" fill="#2ee82e"/><circle cx="608.5" cy="1" r="1.05" fill="#2ee82e"/><circle cx="613.0" cy="1" r="1.05" fill="#2ee82e"/><circle cx="617.5" cy="1" r="1.05" fill="#2ee82e"/><circle cx="622.0" cy="1" r="1.05" fill="#2ee82e"/><circle cx="626.5" cy="1" r="1.05" fill="#2ee82e"/><circle cx="631.0" cy="1" r="1.05" fill="#2ee82e"/><circle cx="635.5" cy="1" r="1.05" fill="#2ee82e"/><circle cx="640.0" cy="1" r="1.05" fill="#2ee82e"/><circle cx="644.5" cy="1" r="1.05" fill="#2ee82e"/><circle cx="649.0" cy="1" r="1.05" fill="#2ee82e"/><circle cx="653.5" cy="1" r="1.05" fill="#2ee82e"/><circle cx="658.0" cy="1" r="1.05" fill="#2ee82e"/><circle cx="662.5" cy="1" r="1.05" fill="#2ee82e"/><circle cx="667.0" cy="1" r="1.05" fill="#2ee82e"/><circle cx="671.5" cy="1" r="1.05" fill="#2ee82e"/><circle cx="676.0" cy="1" r="1.05" fill="#2ee82e"/><circle cx="680.5" cy="1" r="1.05" fill="#2ee82e"/><circle cx="685.0" cy="1" r="1.05" fill="#2ee82e"/><circle cx="689.5" cy="1" r="1.05" fill="#2ee82e"/><circle cx="694.0" cy="1" r="1.05" fill="#2ee82e"/><circle cx="698.5" cy="1" r="1.05" fill="#2ee82e"/><circle cx="703.0" cy="1" r="1.05" fill="#2ee82e"/><circle cx="707.5" cy="1" r="1.05" fill="#2ee82e"/><circle cx="712.0" cy="1" r="1.05" fill="#2ee82e"/><circle cx="716.5" cy="1" r="1.05" fill="#2ee82e"/><circle cx="721.0" cy="1" r="1.05" fill="#2ee82e"/><circle cx="725.5" cy="1" r="1.05" fill="#2ee82e"/><circle cx="730.0" cy="1" r="1.05" fill="#2ee82e"/><circle cx="734.5" cy="1" r="1.05" fill="#2ee82e"/><circle cx="739.0" cy="1" r="1.05" fill="#2ee82e"/><circle cx="743.5" cy="1" r="1.05" fill="#2ee82e"/><circle cx="748.0" cy="1" r="1.05" fill="#2ee82e"/><circle cx="752.5" cy="1" r="1.05" fill="#2ee82e"/><circle cx="757.0" cy="1" r="1.05" fill="#2ee82e"/><circle cx="761.5" cy="1" r="1.05" fill="#2ee82e"/><circle cx="766.0" cy="1" r="1.05" fill="#2ee82e"/><circle cx="770.5" cy="1" r="1.05" fill="#2ee82e"/><circle cx="775.0" cy="1" r="1.05" fill="#2ee82e"/><circle cx="779.5" cy="1" r="1.05" fill="#2ee82e"/><circle cx="784.0" cy="1" r="1.05" fill="#2ee82e"/><circle cx="788.5" cy="1" r="1.05" fill="#2ee82e"/><circle cx="793.0" cy="1" r="1.05" fill="#2ee82e"/><circle cx="797.5" cy="1" r="1.05" fill="#2ee82e"/><circle cx="802.0" cy="1" r="1.05" fill="#2ee82e"/><circle cx="806.5" cy="1" r="1.05" fill="#2ee82e"/><circle cx="811.0" cy="1" r="1.05" fill="#2ee82e"/><circle cx="815.5" cy="1" r="1.05" fill="#2ee82e"/><circle cx="820.0" cy="1" r="1.05" fill="#2ee82e"/><circle cx="824.5" cy="1" r="1.05" fill="#2ee82e"/><circle cx="829.0" cy="1" r="1.05" fill="#2ee82e"/><circle cx="833.5" cy="1" r="1.05" fill="#2ee82e"/><circle cx="838.0" cy="1" r="1.05" fill="#2ee82e"/><circle cx="842.5" cy="1" r="1.05" fill="#2ee82e"/><circle cx="847.0" cy="1" r="1.05" fill="#2ee82e"/><circle cx="851.5" cy="1" r="1.05" fill="#2ee82e"/><circle cx="856.0" cy="1" r="1.05" fill="#2ee82e"/><circle cx="860.5" cy="1" r="1.05" fill="#2ee82e"/><circle cx="865.0" cy="1" r="1.05" fill="#2ee82e"/><circle cx="869.5" cy="1" r="1.05" fill="#2ee82e"/><circle cx="874.0" cy="1" r="1.05" fill="#2ee82e"/><circle cx="878.5" cy="1" r="1.05" fill="#2ee82e"/><circle cx="883.0" cy="1" r="1.05" fill="#2ee82e"/><circle cx="887.5" cy="1" r="1.05" fill="#2ee82e"/><circle cx="892.0" cy="1" r="1.05" fill="#2ee82e"/><circle cx="896.5" cy="1" r="1.05" fill="#2ee82e"/><circle cx="901.0" cy="1" r="1.05" fill="#2ee82e"/><circle cx="905.5" cy="1" r="1.05" fill="#2ee82e"/><circle cx="910.0" cy="1" r="1.05" fill="#2ee82e"/><circle cx="914.5" cy="1" r="1.05" fill="#2ee82e"/><circle cx="919.0" cy="1" r="1.05" fill="#2ee82e"/><circle cx="923.5" cy="1" r="1.05" fill="#2ee82e"/><circle cx="928.0" cy="1" r="1.05" fill="#2ee82e"/><circle cx="932.5" cy="1" r="1.05" fill="#2ee82e"/><circle cx="937.0" cy="1" r="1.05" fill="#2ee82e"/><circle cx="941.5" cy="1" r="1.05" fill="#2ee82e"/><circle cx="946.0" cy="1" r="1.05" fill="#2ee82e"/><circle cx="950.5" cy="1" r="1.05" fill="#2ee82e"/><circle cx="955.0" cy="1" r="1.05" fill="#2ee82e"/><circle cx="959.5" cy="1" r="1.05" fill="#2ee82e"/><circle cx="964.0" cy="1" r="1.05" fill="#2ee82e"/><circle cx="968.5" cy="1" r="1.05" fill="#2ee82e"/><circle cx="973.0" cy="1" r="1.05" fill="#2ee82e"/><circle cx="977.5" cy="1" r="1.05" fill="#2ee82e"/><circle cx="982.0" cy="1" r="1.05" fill="#2ee82e"/><circle cx="986.5" cy="1" r="1.05" fill="#2ee82e"/><circle cx="991.0" cy="1" r="1.05" fill="#2ee82e"/><circle cx="995.5" cy="1" r="1.05" fill="#2ee82e"/><circle cx="1000.0" cy="1" r="1.05" fill="#2ee82e"/><circle cx="1004.5" cy="1" r="1.05" fill="#2ee82e"/><circle cx="1009.0" cy="1" r="1.05" fill="#2ee82e"/><circle cx="1013.5" cy="1" r="1.05" fill="#2ee82e"/><circle cx="1018.0" cy="1" r="1.05" fill="#2ee82e"/><circle cx="1022.5" cy="1" r="1.05" fill="#2ee82e"/><circle cx="1027.0" cy="1" r="1.05" fill="#2ee82e"/><circle cx="1031.5" cy="1" r="1.05" fill="#2ee82e"/><circle cx="1036.0" cy="1" r="1.05" fill="#2ee82e"/><circle cx="1040.5" cy="1" r="1.05" fill="#2ee82e"/><circle cx="1045.0" cy="1" r="1.05" fill="#2ee82e"/><circle cx="1049.5" cy="1" r="1.05" fill="#2ee82e"/><circle cx="1054.0" cy="1" r="1.05" fill="#2ee82e"/><circle cx="1058.5" cy="1" r="1.05" fill="#2ee82e"/><circle cx="1063.0" cy="1" r="1.05" fill="#2ee82e"/><circle cx="1067.5" cy="1" r="1.05" fill="#2ee82e"/><circle cx="1072.0" cy="1" r="1.05" fill="#2ee82e"/><circle cx="1076.5" cy="1" r="1.05" fill="#2ee82e"/><circle cx="1081.0" cy="1" r="1.05" fill="#2ee82e"/><circle cx="1085.5" cy="1" r="1.05" fill="#2ee82e"/><circle cx="1090.0" cy="1" r="1.05" fill="#2ee82e"/><circle cx="1094.5" cy="1" r="1.05" fill="#2ee82e"/><circle cx="1099.0" cy="1" r="1.05" fill="#2ee82e"/><circle cx="1103.5" cy="1" r="1.05" fill="#2ee82e"/><circle cx="1108.0" cy="1" r="1.05" fill="#2ee82e"/><circle cx="1112.5" cy="1" r="1.05" fill="#2ee82e"/><circle cx="1117.0" cy="1" r="1.05" fill="#2ee82e"/><circle cx="1121.5" cy="1" r="1.05" fill="#2ee82e"/><circle cx="1126.0" cy="1" r="1.05" fill="#2ee82e"/><circle cx="1130.5" cy="1" r="1.05" fill="#2ee82e"/><circle cx="1135.0" cy="1" r="1.05" fill="#2ee82e"/><circle cx="1139.5" cy="1" r="1.05" fill="#2ee82e"/><circle cx="1144.0" cy="1" r="1.05" fill="#2ee82e"/><circle cx="1148.5" cy="1" r="1.05" fill="#2ee82e"/><circle cx="1153.0" cy="1" r="1.05" fill="#2ee82e"/><circle cx="1157.5" cy="1" r="1.05" fill="#2ee82e"/><circle cx="1162.0" cy="1" r="1.05" fill="#2ee82e"/><circle cx="1166.5" cy="1" r="1.05" fill="#2ee82e"/><circle cx="1171.0" cy="1" r="1.05" fill="#2ee82e"/><circle cx="1175.5" cy="1" r="1.05" fill="#2ee82e"/><circle cx="1180.0" cy="1" r="1.05" fill="#2ee82e"/><circle cx="1184.5" cy="1" r="1.05" fill="#2ee82e"/><circle cx="1189.0" cy="1" r="1.05" fill="#2ee82e"/><circle cx="1193.5" cy="1" r="1.05" fill="#2ee82e"/><circle cx="1198.0" cy="1" r="1.05" fill="#2ee82e"/><circle cx="1202.5" cy="1" r="1.05" fill="#2ee82e"/><circle cx="1207.0" cy="1" r="1.05" fill="#2ee82e"/><circle cx="1211.5" cy="1" r="1.05" fill="#2ee82e"/><circle cx="1216.0" cy="1" r="1.05" fill="#2ee82e"/><circle cx="1220.5" cy="1" r="1.05" fill="#2ee82e"/><circle cx="1225.0" cy="1" r="1.05" fill="#2ee82e"/><circle cx="1229.5" cy="1" r="1.05" fill="#2ee82e"/><circle cx="1234.0" cy="1" r="1.05" fill="#2ee82e"/><circle cx="1238.5" cy="1" r="1.05" fill="#2ee82e"/><circle cx="1243.0" cy="1" r="1.05" fill="#2ee82e"/><circle cx="1247.5" cy="1" r="1.05" fill="#2ee82e"/><circle cx="1252.0" cy="1" r="1.05" fill="#2ee82e"/><circle cx="1256.5" cy="1" r="1.05" fill="#2ee82e"/><circle cx="1261.0" cy="1" r="1.05" fill="#2ee82e"/><circle cx="1265.5" cy="1" r="1.05" fill="#2ee82e"/><circle cx="1270.0" cy="1" r="1.05" fill="#2ee82e"/><circle cx="1274.5" cy="1" r="1.05" fill="#2ee82e"/><circle cx="1279.0" cy="1" r="1.05" fill="#2ee82e"/><circle cx="1283.5" cy="1" r="1.05" fill="#2ee82e"/><circle cx="1288.0" cy="1" r="1.05" fill="#2ee82e"/><circle cx="1292.5" cy="1" r="1.05" fill="#2ee82e"/><circle cx="1297.0" cy="1" r="1.05" fill="#2ee82e"/><circle cx="1301.5" cy="1" r="1.05" fill="#2ee82e"/><circle cx="1306.0" cy="1" r="1.05" fill="#2ee82e"/><circle cx="1310.5" cy="1" r="1.05" fill="#2ee82e"/><circle cx="1315.0" cy="1" r="1.05" fill="#2ee82e"/><circle cx="1319.5" cy="1" r="1.05" fill="#2ee82e"/><circle cx="1324.0" cy="1" r="1.05" fill="#2ee82e"/><circle cx="1328.5" cy="1" r="1.05" fill="#2ee82e"/><circle cx="1333.0" cy="1" r="1.05" fill="#2ee82e"/><circle cx="1337.5" cy="1" r="1.05" fill="#2ee82e"/><circle cx="1342.0" cy="1" r="1.05" fill="#2ee82e"/><circle cx="1346.5" cy="1" r="1.05" fill="#2ee82e"/><circle cx="1351.0" cy="1" r="1.05" fill="#2ee82e"/><circle cx="1355.5" cy="1" r="1.05" fill="#2ee82e"/><circle cx="1360.0" cy="1" r="1.05" fill="#2ee82e"/><circle cx="1364.5" cy="1" r="1.05" fill="#2ee82e"/><circle cx="1369.0" cy="1" r="1.05" fill="#2ee82e"/><circle cx="1373.5" cy="1" r="1.05" fill="#2ee82e"/><circle cx="1378.0" cy="1" r="1.05" fill="#2ee82e"/></svg>
<svg style="position:absolute;left:89px;top:702px;overflow:visible" width="8" height="5" viewBox="0 0 8 5"><path d="M0 5 L4 0 L8 5 Z" fill="#1fdc1f"/></svg>
<svg style="position:absolute;left:1494px;top:702px;overflow:visible" width="8" height="5" viewBox="0 0 8 5"><path d="M0 5 L4 0 L8 5 Z" fill="#1fdc1f"/></svg>
<div style="position:absolute;left:2px;top:711px;width:1585px;height:30px;box-sizing:border-box;background:#f0f0f0;"></div>
<div style="position:absolute;left:3px;top:712px;width:1573px;height:27px;box-sizing:border-box;background:linear-gradient(to bottom,#fefefe 0%,#f2f2f2 45%,#e0e0e0 100%);border-bottom:1px solid #d0d0d0;"></div>
<div class="t" style="left:8px;top:712px;font-size:19px;color:#000;font-weight:bold;-webkit-text-stroke:0.3px currentColor;">更名文件列表</div>
<div class="ck" style="left:1055px;top:715px"><svg width="19" height="19" viewBox="0 0 19 19"><path d="M3.5 9.5 L7.5 13.5 L15.5 4.5" stroke="#333" stroke-width="1.6" fill="none"/></svg></div>
<div class="t" style="left:1078px;top:712px;font-size:18px;color:#000;">自动预览</div>
<div class="ck" style="left:1163px;top:715px"></div>
<div class="t" style="left:1185px;top:712px;font-size:18px;color:#000;">只预览前</div>
<div style="position:absolute;left:1261px;top:714px;width:54px;height:23px;box-sizing:border-box;background:#fff;border-top:1px solid #d8d8d8;border-left:1px solid #d8d8d8;"></div>
<div class="t" style="left:1263px;top:713px;font-size:16px;color:#000;">10</div>
<div class="ck" style="left:1327px;top:715px"></div>
<div class="t" style="left:1350px;top:712px;font-size:18px;color:#000;">显示实际图标</div>
<div class="ck" style="left:1471px;top:715px"></div>
<div class="t" style="left:1495px;top:712px;font-size:18px;color:#000;">自动列宽</div>
<div style="position:absolute;left:2px;top:742px;width:1575px;height:228px;box-sizing:border-box;background:#fff;border:1.5px solid #6b9ee0;"></div>
<div style="position:absolute;left:3px;top:743px;width:1570px;height:26px;box-sizing:border-box;background:linear-gradient(to bottom,#fbfdff 0%,#e3effc 45%,#bcd8f8 100%);border-bottom:2px solid #6aa0e6;"></div>
<div style="position:absolute;left:64px;top:746px;width:1px;height:21px;box-sizing:border-box;background:#a9c8ee;"></div>
<div style="position:absolute;left:64px;top:769px;width:1px;height:200px;box-sizing:border-box;background:#e4e4e4;"></div>
<div style="position:absolute;left:110px;top:746px;width:1px;height:21px;box-sizing:border-box;background:#a9c8ee;"></div>
<div style="position:absolute;left:110px;top:769px;width:1px;height:200px;box-sizing:border-box;background:#e4e4e4;"></div>
<div style="position:absolute;left:334px;top:746px;width:1px;height:21px;box-sizing:border-box;background:#a9c8ee;"></div>
<div style="position:absolute;left:334px;top:769px;width:1px;height:200px;box-sizing:border-box;background:#e4e4e4;"></div>
<div style="position:absolute;left:439px;top:746px;width:1px;height:21px;box-sizing:border-box;background:#a9c8ee;"></div>
<div style="position:absolute;left:439px;top:769px;width:1px;height:200px;box-sizing:border-box;background:#e4e4e4;"></div>
<div style="position:absolute;left:484px;top:746px;width:1px;height:21px;box-sizing:border-box;background:#a9c8ee;"></div>
<div style="position:absolute;left:484px;top:769px;width:1px;height:200px;box-sizing:border-box;background:#e4e4e4;"></div>
<div style="position:absolute;left:710px;top:746px;width:1px;height:21px;box-sizing:border-box;background:#a9c8ee;"></div>
<div style="position:absolute;left:710px;top:769px;width:1px;height:200px;box-sizing:border-box;background:#e4e4e4;"></div>
<div style="position:absolute;left:814px;top:746px;width:1px;height:21px;box-sizing:border-box;background:#a9c8ee;"></div>
<div style="position:absolute;left:814px;top:769px;width:1px;height:200px;box-sizing:border-box;background:#e4e4e4;"></div>
<div style="position:absolute;left:1002px;top:746px;width:1px;height:21px;box-sizing:border-box;background:#a9c8ee;"></div>
<div style="position:absolute;left:1002px;top:769px;width:1px;height:200px;box-sizing:border-box;background:#e4e4e4;"></div>
<div style="position:absolute;left:1122px;top:746px;width:1px;height:21px;box-sizing:border-box;background:#a9c8ee;"></div>
<div style="position:absolute;left:1122px;top:769px;width:1px;height:200px;box-sizing:border-box;background:#e4e4e4;"></div>
<div style="position:absolute;left:1272px;top:746px;width:1px;height:21px;box-sizing:border-box;background:#a9c8ee;"></div>
<div style="position:absolute;left:1272px;top:769px;width:1px;height:200px;box-sizing:border-box;background:#e4e4e4;"></div>
<div style="position:absolute;left:19px;top:743px;width:2px;height:226px;box-sizing:border-box;background:#6b9ee0;"></div>
<div style="position:absolute;left:21px;top:800px;width:1553px;height:1px;box-sizing:border-box;background:#e4e4e4;"></div>
<div style="position:absolute;left:21px;top:832px;width:1553px;height:1px;box-sizing:border-box;background:#e4e4e4;"></div>
<div style="position:absolute;left:21px;top:863px;width:1553px;height:1px;box-sizing:border-box;background:#e4e4e4;"></div>
<div style="position:absolute;left:21px;top:895px;width:1553px;height:1px;box-sizing:border-box;background:#e4e4e4;"></div>
<div style="position:absolute;left:21px;top:927px;width:1553px;height:1px;box-sizing:border-box;background:#e4e4e4;"></div>
<div style="position:absolute;left:21px;top:958px;width:1553px;height:1px;box-sizing:border-box;background:#e4e4e4;"></div>
<div style="position:absolute;left:3px;top:770px;width:16px;height:30px;box-sizing:border-box;background:linear-gradient(to bottom,#f8fbff 0%,#d6e7fb 50%,#a9cbf4 100%);border-bottom:1px solid #fff;"></div>
<div style="position:absolute;left:3px;top:801px;width:16px;height:31px;box-sizing:border-box;background:linear-gradient(to bottom,#f8fbff 0%,#d6e7fb 50%,#a9cbf4 100%);border-bottom:1px solid #fff;"></div>
<div style="position:absolute;left:3px;top:833px;width:16px;height:30px;box-sizing:border-box;background:linear-gradient(to bottom,#f8fbff 0%,#d6e7fb 50%,#a9cbf4 100%);border-bottom:1px solid #fff;"></div>
<div style="position:absolute;left:3px;top:864px;width:16px;height:31px;box-sizing:border-box;background:linear-gradient(to bottom,#f8fbff 0%,#d6e7fb 50%,#a9cbf4 100%);border-bottom:1px solid #fff;"></div>
<div style="position:absolute;left:3px;top:896px;width:16px;height:31px;box-sizing:border-box;background:linear-gradient(to bottom,#f8fbff 0%,#d6e7fb 50%,#a9cbf4 100%);border-bottom:1px solid #fff;"></div>
<div style="position:absolute;left:3px;top:928px;width:16px;height:30px;box-sizing:border-box;background:linear-gradient(to bottom,#f8fbff 0%,#d6e7fb 50%,#a9cbf4 100%);border-bottom:1px solid #fff;"></div>
<div style="position:absolute;left:3px;top:959px;width:16px;height:10px;box-sizing:border-box;background:linear-gradient(to bottom,#f8fbff 0%,#d6e7fb 50%,#a9cbf4 100%);border-bottom:1px solid #fff;"></div>
<div class="t" style="left:26px;top:744px;font-size:18px;color:#000;">选择</div>
<div class="t" style="left:70px;top:744px;font-size:18px;color:#000;">图标</div>
<div class="t" style="left:115px;top:744px;font-size:18px;color:#000;">实际文件名</div>
<div class="t" style="left:340px;top:744px;font-size:18px;color:#000;">实际扩展名</div>
<div class="t" style="left:445px;top:744px;font-size:18px;color:#000;">状态</div>
<div class="t" style="left:490px;top:744px;font-size:18px;color:#000;">新文件名</div>
<div class="t" style="left:716px;top:744px;font-size:18px;color:#000;">新扩展名</div>
<div class="t" style="left:821px;top:744px;font-size:18px;color:#000;">修改日期</div>
<div class="t" style="left:1009px;top:744px;font-size:18px;color:#000;">属性</div>
<div class="t" style="left:1128px;top:744px;font-size:18px;color:#000;">大小(Bytes)</div>
<div class="t" style="left:1278px;top:744px;font-size:18px;color:#000;">路径</div>
<div style="position:absolute;left:1576px;top:776px;width:11px;height:128px;box-sizing:border-box;border:2px solid #1a7ad6;border-radius:2px;background:#f0f0f0;"></div>
<div style="position:absolute;left:1580px;top:790px;width:2px;height:100px;box-sizing:border-box;background-image:radial-gradient(circle,#22ee22 0.9px,transparent 1.3px);background-size:2px 4px;"></div>
<svg style="position:absolute;left:1578px;top:782px;overflow:visible" width="6" height="10" viewBox="0 0 6 10"><path d="M6 0 L0 5 L6 10 Z" fill="#22dd22"/></svg>
<svg style="position:absolute;left:1578px;top:886px;overflow:visible" width="6" height="10" viewBox="0 0 6 10"><path d="M6 0 L0 5 L6 10 Z" fill="#22dd22"/></svg>
<div style="position:absolute;left:81px;top:968px;width:1428px;height:13px;box-sizing:border-box;border:2px solid #1a7ad6;border-radius:3px;background:#f0f0f0;"></div>
<svg style="position:absolute;left:103px;top:973px;overflow:visible" width="1384" height="2" viewBox="0 0 1384 2"><circle cx="1.0" cy="1" r="1.05" fill="#2ee82e"/><circle cx="5.5" cy="1" r="1.05" fill="#2ee82e"/><circle cx="10.0" cy="1" r="1.05" fill="#2ee82e"/><circle cx="14.5" cy="1" r="1.05" fill="#2ee82e"/><circle cx="19.0" cy="1" r="1.05" fill="#2ee82e"/><circle cx="23.5" cy="1" r="1.05" fill="#2ee82e"/><circle cx="28.0" cy="1" r="1.05" fill="#2ee82e"/><circle cx="32.5" cy="1" r="1.05" fill="#2ee82e"/><circle cx="37.0" cy="1" r="1.05" fill="#2ee82e"/><circle cx="41.5" cy="1" r="1.05" fill="#2ee82e"/><circle cx="46.0" cy="1" r="1.05" fill="#2ee82e"/><circle cx="50.5" cy="1" r="1.05" fill="#2ee82e"/><circle cx="55.0" cy="1" r="1.05" fill="#2ee82e"/><circle cx="59.5" cy="1" r="1.05" fill="#2ee82e"/><circle cx="64.0" cy="1" r="1.05" fill="#2ee82e"/><circle cx="68.5" cy="1" r="1.05" fill="#2ee82e"/><circle cx="73.0" cy="1" r="1.05" fill="#2ee82e"/><circle cx="77.5" cy="1" r="1.05" fill="#2ee82e"/><circle cx="82.0" cy="1" r="1.05" fill="#2ee82e"/><circle cx="86.5" cy="1" r="1.05" fill="#2ee82e"/><circle cx="91.0" cy="1" r="1.05" fill="#2ee82e"/><circle cx="95.5" cy="1" r="1.05" fill="#2ee82e"/><circle cx="100.0" cy="1" r="1.05" fill="#2ee82e"/><circle cx="104.5" cy="1" r="1.05" fill="#2ee82e"/><circle cx="109.0" cy="1" r="1.05" fill="#2ee82e"/><circle cx="113.5" cy="1" r="1.05" fill="#2ee82e"/><circle cx="118.0" cy="1" r="1.05" fill="#2ee82e"/><circle cx="122.5" cy="1" r="1.05" fill="#2ee82e"/><circle cx="127.0" cy="1" r="1.05" fill="#2ee82e"/><circle cx="131.5" cy="1" r="1.05" fill="#2ee82e"/><circle cx="136.0" cy="1" r="1.05" fill="#2ee82e"/><circle cx="140.5" cy="1" r="1.05" fill="#2ee82e"/><circle cx="145.0" cy="1" r="1.05" fill="#2ee82e"/><circle cx="149.5" cy="1" r="1.05" fill="#2ee82e"/><circle cx="154.0" cy="1" r="1.05" fill="#2ee82e"/><circle cx="158.5" cy="1" r="1.05" fill="#2ee82e"/><circle cx="163.0" cy="1" r="1.05" fill="#2ee82e"/><circle cx="167.5" cy="1" r="1.05" fill="#2ee82e"/><circle cx="172.0" cy="1" r="1.05" fill="#2ee82e"/><circle cx="176.5" cy="1" r="1.05" fill="#2ee82e"/><circle cx="181.0" cy="1" r="1.05" fill="#2ee82e"/><circle cx="185.5" cy="1" r="1.05" fill="#2ee82e"/><circle cx="190.0" cy="1" r="1.05" fill="#2ee82e"/><circle cx="194.5" cy="1" r="1.05" fill="#2ee82e"/><circle cx="199.0" cy="1" r="1.05" fill="#2ee82e"/><circle cx="203.5" cy="1" r="1.05" fill="#2ee82e"/><circle cx="208.0" cy="1" r="1.05" fill="#2ee82e"/><circle cx="212.5" cy="1" r="1.05" fill="#2ee82e"/><circle cx="217.0" cy="1" r="1.05" fill="#2ee82e"/><circle cx="221.5" cy="1" r="1.05" fill="#2ee82e"/><circle cx="226.0" cy="1" r="1.05" fill="#2ee82e"/><circle cx="230.5" cy="1" r="1.05" fill="#2ee82e"/><circle cx="235.0" cy="1" r="1.05" fill="#2ee82e"/><circle cx="239.5" cy="1" r="1.05" fill="#2ee82e"/><circle cx="244.0" cy="1" r="1.05" fill="#2ee82e"/><circle cx="248.5" cy="1" r="1.05" fill="#2ee82e"/><circle cx="253.0" cy="1" r="1.05" fill="#2ee82e"/><circle cx="257.5" cy="1" r="1.05" fill="#2ee82e"/><circle cx="262.0" cy="1" r="1.05" fill="#2ee82e"/><circle cx="266.5" cy="1" r="1.05" fill="#2ee82e"/><circle cx="271.0" cy="1" r="1.05" fill="#2ee82e"/><circle cx="275.5" cy="1" r="1.05" fill="#2ee82e"/><circle cx="280.0" cy="1" r="1.05" fill="#2ee82e"/><circle cx="284.5" cy="1" r="1.05" fill="#2ee82e"/><circle cx="289.0" cy="1" r="1.05" fill="#2ee82e"/><circle cx="293.5" cy="1" r="1.05" fill="#2ee82e"/><circle cx="298.0" cy="1" r="1.05" fill="#2ee82e"/><circle cx="302.5" cy="1" r="1.05" fill="#2ee82e"/><circle cx="307.0" cy="1" r="1.05" fill="#2ee82e"/><circle cx="311.5" cy="1" r="1.05" fill="#2ee82e"/><circle cx="316.0" cy="1" r="1.05" fill="#2ee82e"/><circle cx="320.5" cy="1" r="1.05" fill="#2ee82e"/><circle cx="325.0" cy="1" r="1.05" fill="#2ee82e"/><circle cx="329.5" cy="1" r="1.05" fill="#2ee82e"/><circle cx="334.0" cy="1" r="1.05" fill="#2ee82e"/><circle cx="338.5" cy="1" r="1.05" fill="#2ee82e"/><circle cx="343.0" cy="1" r="1.05" fill="#2ee82e"/><circle cx="347.5" cy="1" r="1.05" fill="#2ee82e"/><circle cx="352.0" cy="1" r="1.05" fill="#2ee82e"/><circle cx="356.5" cy="1" r="1.05" fill="#2ee82e"/><circle cx="361.0" cy="1" r="1.05" fill="#2ee82e"/><circle cx="365.5" cy="1" r="1.05" fill="#2ee82e"/><circle cx="370.0" cy="1" r="1.05" fill="#2ee82e"/><circle cx="374.5" cy="1" r="1.05" fill="#2ee82e"/><circle cx="379.0" cy="1" r="1.05" fill="#2ee82e"/><circle cx="383.5" cy="1" r="1.05" fill="#2ee82e"/><circle cx="388.0" cy="1" r="1.05" fill="#2ee82e"/><circle cx="392.5" cy="1" r="1.05" fill="#2ee82e"/><circle cx="397.0" cy="1" r="1.05" fill="#2ee82e"/><circle cx="401.5" cy="1" r="1.05" fill="#2ee82e"/><circle cx="406.0" cy="1" r="1.05" fill="#2ee82e"/><circle cx="410.5" cy="1" r="1.05" fill="#2ee82e"/><circle cx="415.0" cy="1" r="1.05" fill="#2ee82e"/><circle cx="419.5" cy="1" r="1.05" fill="#2ee82e"/><circle cx="424.0" cy="1" r="1.05" fill="#2ee82e"/><circle cx="428.5" cy="1" r="1.05" fill="#2ee82e"/><circle cx="433.0" cy="1" r="1.05" fill="#2ee82e"/><circle cx="437.5" cy="1" r="1.05" fill="#2ee82e"/><circle cx="442.0" cy="1" r="1.05" fill="#2ee82e"/><circle cx="446.5" cy="1" r="1.05" fill="#2ee82e"/><circle cx="451.0" cy="1" r="1.05" fill="#2ee82e"/><circle cx="455.5" cy="1" r="1.05" fill="#2ee82e"/><circle cx="460.0" cy="1" r="1.05" fill="#2ee82e"/><circle cx="464.5" cy="1" r="1.05" fill="#2ee82e"/><circle cx="469.0" cy="1" r="1.05" fill="#2ee82e"/><circle cx="473.5" cy="1" r="1.05" fill="#2ee82e"/><circle cx="478.0" cy="1" r="1.05" fill="#2ee82e"/><circle cx="482.5" cy="1" r="1.05" fill="#2ee82e"/><circle cx="487.0" cy="1" r="1.05" fill="#2ee82e"/><circle cx="491.5" cy="1" r="1.05" fill="#2ee82e"/><circle cx="496.0" cy="1" r="1.05" fill="#2ee82e"/><circle cx="500.5" cy="1" r="1.05" fill="#2ee82e"/><circle cx="505.0" cy="1" r="1.05" fill="#2ee82e"/><circle cx="509.5" cy="1" r="1.05" fill="#2ee82e"/><circle cx="514.0" cy="1" r="1.05" fill="#2ee82e"/><circle cx="518.5" cy="1" r="1.05" fill="#2ee82e"/><circle cx="523.0" cy="1" r="1.05" fill="#2ee82e"/><circle cx="527.5" cy="1" r="1.05" fill="#2ee82e"/><circle cx="532.0" cy="1" r="1.05" fill="#2ee82e"/><circle cx="536.5" cy="1" r="1.05" fill="#2ee82e"/><circle cx="541.0" cy="1" r="1.05" fill="#2ee82e"/><circle cx="545.5" cy="1" r="1.05" fill="#2ee82e"/><circle cx="550.0" cy="1" r="1.05" fill="#2ee82e"/><circle cx="554.5" cy="1" r="1.05" fill="#2ee82e"/><circle cx="559.0" cy="1" r="1.05" fill="#2ee82e"/><circle cx="563.5" cy="1" r="1.05" fill="#2ee82e"/><circle cx="568.0" cy="1" r="1.05" fill="#2ee82e"/><circle cx="572.5" cy="1" r="1.05" fill="#2ee82e"/><circle cx="577.0" cy="1" r="1.05" fill="#2ee82e"/><circle cx="581.5" cy="1" r="1.05" fill="#2ee82e"/><circle cx="586.0" cy="1" r="1.05" fill="#2ee82e"/><circle cx="590.5" cy="1" r="1.05" fill="#2ee82e"/><circle cx="595.0" cy="1" r="1.05" fill="#2ee82e"/><circle cx="599.5" cy="1" r="1.05" fill="#2ee82e"/><circle cx="604.0" cy="1" r="1.05" fill="#2ee82e"/><circle cx="608.5" cy="1" r="1.05" fill="#2ee82e"/><circle cx="613.0" cy="1" r="1.05" fill="#2ee82e"/><circle cx="617.5" cy="1" r="1.05" fill="#2ee82e"/><circle cx="622.0" cy="1" r="1.05" fill="#2ee82e"/><circle cx="626.5" cy="1" r="1.05" fill="#2ee82e"/><circle cx="631.0" cy="1" r="1.05" fill="#2ee82e"/><circle cx="635.5" cy="1" r="1.05" fill="#2ee82e"/><circle cx="640.0" cy="1" r="1.05" fill="#2ee82e"/><circle cx="644.5" cy="1" r="1.05" fill="#2ee82e"/><circle cx="649.0" cy="1" r="1.05" fill="#2ee82e"/><circle cx="653.5" cy="1" r="1.05" fill="#2ee82e"/><circle cx="658.0" cy="1" r="1.05" fill="#2ee82e"/><circle cx="662.5" cy="1" r="1.05" fill="#2ee82e"/><circle cx="667.0" cy="1" r="1.05" fill="#2ee82e"/><circle cx="671.5" cy="1" r="1.05" fill="#2ee82e"/><circle cx="676.0" cy="1" r="1.05" fill="#2ee82e"/><circle cx="680.5" cy="1" r="1.05" fill="#2ee82e"/><circle cx="685.0" cy="1" r="1.05" fill="#2ee82e"/><circle cx="689.5" cy="1" r="1.05" fill="#2ee82e"/><circle cx="694.0" cy="1" r="1.05" fill="#2ee82e"/><circle cx="698.5" cy="1" r="1.05" fill="#2ee82e"/><circle cx="703.0" cy="1" r="1.05" fill="#2ee82e"/><circle cx="707.5" cy="1" r="1.05" fill="#2ee82e"/><circle cx="712.0" cy="1" r="1.05" fill="#2ee82e"/><circle cx="716.5" cy="1" r="1.05" fill="#2ee82e"/><circle cx="721.0" cy="1" r="1.05" fill="#2ee82e"/><circle cx="725.5" cy="1" r="1.05" fill="#2ee82e"/><circle cx="730.0" cy="1" r="1.05" fill="#2ee82e"/><circle cx="734.5" cy="1" r="1.05" fill="#2ee82e"/><circle cx="739.0" cy="1" r="1.05" fill="#2ee82e"/><circle cx="743.5" cy="1" r="1.05" fill="#2ee82e"/><circle cx="748.0" cy="1" r="1.05" fill="#2ee82e"/><circle cx="752.5" cy="1" r="1.05" fill="#2ee82e"/><circle cx="757.0" cy="1" r="1.05" fill="#2ee82e"/><circle cx="761.5" cy="1" r="1.05" fill="#2ee82e"/><circle cx="766.0" cy="1" r="1.05" fill="#2ee82e"/><circle cx="770.5" cy="1" r="1.05" fill="#2ee82e"/><circle cx="775.0" cy="1" r="1.05" fill="#2ee82e"/><circle cx="779.5" cy="1" r="1.05" fill="#2ee82e"/><circle cx="784.0" cy="1" r="1.05" fill="#2ee82e"/><circle cx="788.5" cy="1" r="1.05" fill="#2ee82e"/><circle cx="793.0" cy="1" r="1.05" fill="#2ee82e"/><circle cx="797.5" cy="1" r="1.05" fill="#2ee82e"/><circle cx="802.0" cy="1" r="1.05" fill="#2ee82e"/><circle cx="806.5" cy="1" r="1.05" fill="#2ee82e"/><circle cx="811.0" cy="1" r="1.05" fill="#2ee82e"/><circle cx="815.5" cy="1" r="1.05" fill="#2ee82e"/><circle cx="820.0" cy="1" r="1.05" fill="#2ee82e"/><circle cx="824.5" cy="1" r="1.05" fill="#2ee82e"/><circle cx="829.0" cy="1" r="1.05" fill="#2ee82e"/><circle cx="833.5" cy="1" r="1.05" fill="#2ee82e"/><circle cx="838.0" cy="1" r="1.05" fill="#2ee82e"/><circle cx="842.5" cy="1" r="1.05" fill="#2ee82e"/><circle cx="847.0" cy="1" r="1.05" fill="#2ee82e"/><circle cx="851.5" cy="1" r="1.05" fill="#2ee82e"/><circle cx="856.0" cy="1" r="1.05" fill="#2ee82e"/><circle cx="860.5" cy="1" r="1.05" fill="#2ee82e"/><circle cx="865.0" cy="1" r="1.05" fill="#2ee82e"/><circle cx="869.5" cy="1" r="1.05" fill="#2ee82e"/><circle cx="874.0" cy="1" r="1.05" fill="#2ee82e"/><circle cx="878.5" cy="1" r="1.05" fill="#2ee82e"/><circle cx="883.0" cy="1" r="1.05" fill="#2ee82e"/><circle cx="887.5" cy="1" r="1.05" fill="#2ee82e"/><circle cx="892.0" cy="1" r="1.05" fill="#2ee82e"/><circle cx="896.5" cy="1" r="1.05" fill="#2ee82e"/><circle cx="901.0" cy="1" r="1.05" fill="#2ee82e"/><circle cx="905.5" cy="1" r="1.05" fill="#2ee82e"/><circle cx="910.0" cy="1" r="1.05" fill="#2ee82e"/><circle cx="914.5" cy="1" r="1.05" fill="#2ee82e"/><circle cx="919.0" cy="1" r="1.05" fill="#2ee82e"/><circle cx="923.5" cy="1" r="1.05" fill="#2ee82e"/><circle cx="928.0" cy="1" r="1.05" fill="#2ee82e"/><circle cx="932.5" cy="1" r="1.05" fill="#2ee82e"/><circle cx="937.0" cy="1" r="1.05" fill="#2ee82e"/><circle cx="941.5" cy="1" r="1.05" fill="#2ee82e"/><circle cx="946.0" cy="1" r="1.05" fill="#2ee82e"/><circle cx="950.5" cy="1" r="1.05" fill="#2ee82e"/><circle cx="955.0" cy="1" r="1.05" fill="#2ee82e"/><circle cx="959.5" cy="1" r="1.05" fill="#2ee82e"/><circle cx="964.0" cy="1" r="1.05" fill="#2ee82e"/><circle cx="968.5" cy="1" r="1.05" fill="#2ee82e"/><circle cx="973.0" cy="1" r="1.05" fill="#2ee82e"/><circle cx="977.5" cy="1" r="1.05" fill="#2ee82e"/><circle cx="982.0" cy="1" r="1.05" fill="#2ee82e"/><circle cx="986.5" cy="1" r="1.05" fill="#2ee82e"/><circle cx="991.0" cy="1" r="1.05" fill="#2ee82e"/><circle cx="995.5" cy="1" r="1.05" fill="#2ee82e"/><circle cx="1000.0" cy="1" r="1.05" fill="#2ee82e"/><circle cx="1004.5" cy="1" r="1.05" fill="#2ee82e"/><circle cx="1009.0" cy="1" r="1.05" fill="#2ee82e"/><circle cx="1013.5" cy="1" r="1.05" fill="#2ee82e"/><circle cx="1018.0" cy="1" r="1.05" fill="#2ee82e"/><circle cx="1022.5" cy="1" r="1.05" fill="#2ee82e"/><circle cx="1027.0" cy="1" r="1.05" fill="#2ee82e"/><circle cx="1031.5" cy="1" r="1.05" fill="#2ee82e"/><circle cx="1036.0" cy="1" r="1.05" fill="#2ee82e"/><circle cx="1040.5" cy="1" r="1.05" fill="#2ee82e"/><circle cx="1045.0" cy="1" r="1.05" fill="#2ee82e"/><circle cx="1049.5" cy="1" r="1.05" fill="#2ee82e"/><circle cx="1054.0" cy="1" r="1.05" fill="#2ee82e"/><circle cx="1058.5" cy="1" r="1.05" fill="#2ee82e"/><circle cx="1063.0" cy="1" r="1.05" fill="#2ee82e"/><circle cx="1067.5" cy="1" r="1.05" fill="#2ee82e"/><circle cx="1072.0" cy="1" r="1.05" fill="#2ee82e"/><circle cx="1076.5" cy="1" r="1.05" fill="#2ee82e"/><circle cx="1081.0" cy="1" r="1.05" fill="#2ee82e"/><circle cx="1085.5" cy="1" r="1.05" fill="#2ee82e"/><circle cx="1090.0" cy="1" r="1.05" fill="#2ee82e"/><circle cx="1094.5" cy="1" r="1.05" fill="#2ee82e"/><circle cx="1099.0" cy="1" r="1.05" fill="#2ee82e"/><circle cx="1103.5" cy="1" r="1.05" fill="#2ee82e"/><circle cx="1108.0" cy="1" r="1.05" fill="#2ee82e"/><circle cx="1112.5" cy="1" r="1.05" fill="#2ee82e"/><circle cx="1117.0" cy="1" r="1.05" fill="#2ee82e"/><circle cx="1121.5" cy="1" r="1.05" fill="#2ee82e"/><circle cx="1126.0" cy="1" r="1.05" fill="#2ee82e"/><circle cx="1130.5" cy="1" r="1.05" fill="#2ee82e"/><circle cx="1135.0" cy="1" r="1.05" fill="#2ee82e"/><circle cx="1139.5" cy="1" r="1.05" fill="#2ee82e"/><circle cx="1144.0" cy="1" r="1.05" fill="#2ee82e"/><circle cx="1148.5" cy="1" r="1.05" fill="#2ee82e"/><circle cx="1153.0" cy="1" r="1.05" fill="#2ee82e"/><circle cx="1157.5" cy="1" r="1.05" fill="#2ee82e"/><circle cx="1162.0" cy="1" r="1.05" fill="#2ee82e"/><circle cx="1166.5" cy="1" r="1.05" fill="#2ee82e"/><circle cx="1171.0" cy="1" r="1.05" fill="#2ee82e"/><circle cx="1175.5" cy="1" r="1.05" fill="#2ee82e"/><circle cx="1180.0" cy="1" r="1.05" fill="#2ee82e"/><circle cx="1184.5" cy="1" r="1.05" fill="#2ee82e"/><circle cx="1189.0" cy="1" r="1.05" fill="#2ee82e"/><circle cx="1193.5" cy="1" r="1.05" fill="#2ee82e"/><circle cx="1198.0" cy="1" r="1.05" fill="#2ee82e"/><circle cx="1202.5" cy="1" r="1.05" fill="#2ee82e"/><circle cx="1207.0" cy="1" r="1.05" fill="#2ee82e"/><circle cx="1211.5" cy="1" r="1.05" fill="#2ee82e"/><circle cx="1216.0" cy="1" r="1.05" fill="#2ee82e"/><circle cx="1220.5" cy="1" r="1.05" fill="#2ee82e"/><circle cx="1225.0" cy="1" r="1.05" fill="#2ee82e"/><circle cx="1229.5" cy="1" r="1.05" fill="#2ee82e"/><circle cx="1234.0" cy="1" r="1.05" fill="#2ee82e"/><circle cx="1238.5" cy="1" r="1.05" fill="#2ee82e"/><circle cx="1243.0" cy="1" r="1.05" fill="#2ee82e"/><circle cx="1247.5" cy="1" r="1.05" fill="#2ee82e"/><circle cx="1252.0" cy="1" r="1.05" fill="#2ee82e"/><circle cx="1256.5" cy="1" r="1.05" fill="#2ee82e"/><circle cx="1261.0" cy="1" r="1.05" fill="#2ee82e"/><circle cx="1265.5" cy="1" r="1.05" fill="#2ee82e"/><circle cx="1270.0" cy="1" r="1.05" fill="#2ee82e"/><circle cx="1274.5" cy="1" r="1.05" fill="#2ee82e"/><circle cx="1279.0" cy="1" r="1.05" fill="#2ee82e"/><circle cx="1283.5" cy="1" r="1.05" fill="#2ee82e"/><circle cx="1288.0" cy="1" r="1.05" fill="#2ee82e"/><circle cx="1292.5" cy="1" r="1.05" fill="#2ee82e"/><circle cx="1297.0" cy="1" r="1.05" fill="#2ee82e"/><circle cx="1301.5" cy="1" r="1.05" fill="#2ee82e"/><circle cx="1306.0" cy="1" r="1.05" fill="#2ee82e"/><circle cx="1310.5" cy="1" r="1.05" fill="#2ee82e"/><circle cx="1315.0" cy="1" r="1.05" fill="#2ee82e"/><circle cx="1319.5" cy="1" r="1.05" fill="#2ee82e"/><circle cx="1324.0" cy="1" r="1.05" fill="#2ee82e"/><circle cx="1328.5" cy="1" r="1.05" fill="#2ee82e"/><circle cx="1333.0" cy="1" r="1.05" fill="#2ee82e"/><circle cx="1337.5" cy="1" r="1.05" fill="#2ee82e"/><circle cx="1342.0" cy="1" r="1.05" fill="#2ee82e"/><circle cx="1346.5" cy="1" r="1.05" fill="#2ee82e"/><circle cx="1351.0" cy="1" r="1.05" fill="#2ee82e"/><circle cx="1355.5" cy="1" r="1.05" fill="#2ee82e"/><circle cx="1360.0" cy="1" r="1.05" fill="#2ee82e"/><circle cx="1364.5" cy="1" r="1.05" fill="#2ee82e"/><circle cx="1369.0" cy="1" r="1.05" fill="#2ee82e"/><circle cx="1373.5" cy="1" r="1.05" fill="#2ee82e"/><circle cx="1378.0" cy="1" r="1.05" fill="#2ee82e"/></svg>
<svg style="position:absolute;left:89px;top:971px;overflow:visible" width="8" height="5" viewBox="0 0 8 5"><path d="M0 5 L4 0 L8 5 Z" fill="#1fdc1f"/></svg>
<svg style="position:absolute;left:1494px;top:971px;overflow:visible" width="8" height="5" viewBox="0 0 8 5"><path d="M0 5 L4 0 L8 5 Z" fill="#1fdc1f"/></svg>
<div style="position:absolute;left:1px;top:981px;width:1587px;height:28px;box-sizing:border-box;background:#f0f0f0;border-top:1.5px solid #d9d9d9;"></div>
<div class="t" style="left:5px;top:984px;font-size:18px;color:#000;">总共载入对象: 0个</div>
<div class="t" style="left:163px;top:984px;font-size:18px;color:#000;">更名文件列表内对象: 0个</div>
<div class="t" style="left:376px;top:984px;font-size:18px;color:#000;">操作记录: 0条</div>
<div style="position:absolute;left:675px;top:983px;width:1px;height:24px;box-sizing:border-box;background:#c8c8c8;"></div>
<div style="position:absolute;left:676px;top:983px;width:1px;height:24px;box-sizing:border-box;background:#fff;"></div>
<div style="position:absolute;left:802px;top:983px;width:1px;height:24px;box-sizing:border-box;background:#c8c8c8;"></div>
<div style="position:absolute;left:803px;top:983px;width:1px;height:24px;box-sizing:border-box;background:#fff;"></div>
<div class="t" style="left:683px;top:984px;font-size:18px;color:#000;">0.646 秒</div>
<div class="t" style="left:809px;top:984px;font-size:18px;color:#000;">今天是2020年9月5日 星期六<span class="fc">,</span>欢迎使用菲菲更名宝贝x64版!</div>
<svg style="position:absolute;left:1572px;top:993px;overflow:visible" width="14" height="14" viewBox="0 0 14 14"><rect x="10.5" y="1" width="2.6" height="2.6" fill="#b4b4b4"/><rect x="6" y="5.5" width="2.6" height="2.6" fill="#b4b4b4"/><rect x="10.5" y="5.5" width="2.6" height="2.6" fill="#b4b4b4"/><rect x="1.5" y="10" width="2.6" height="2.6" fill="#b4b4b4"/><rect x="6" y="10" width="2.6" height="2.6" fill="#b4b4b4"/><rect x="10.5" y="10" width="2.6" height="2.6" fill="#b4b4b4"/></svg></div></body></html>
